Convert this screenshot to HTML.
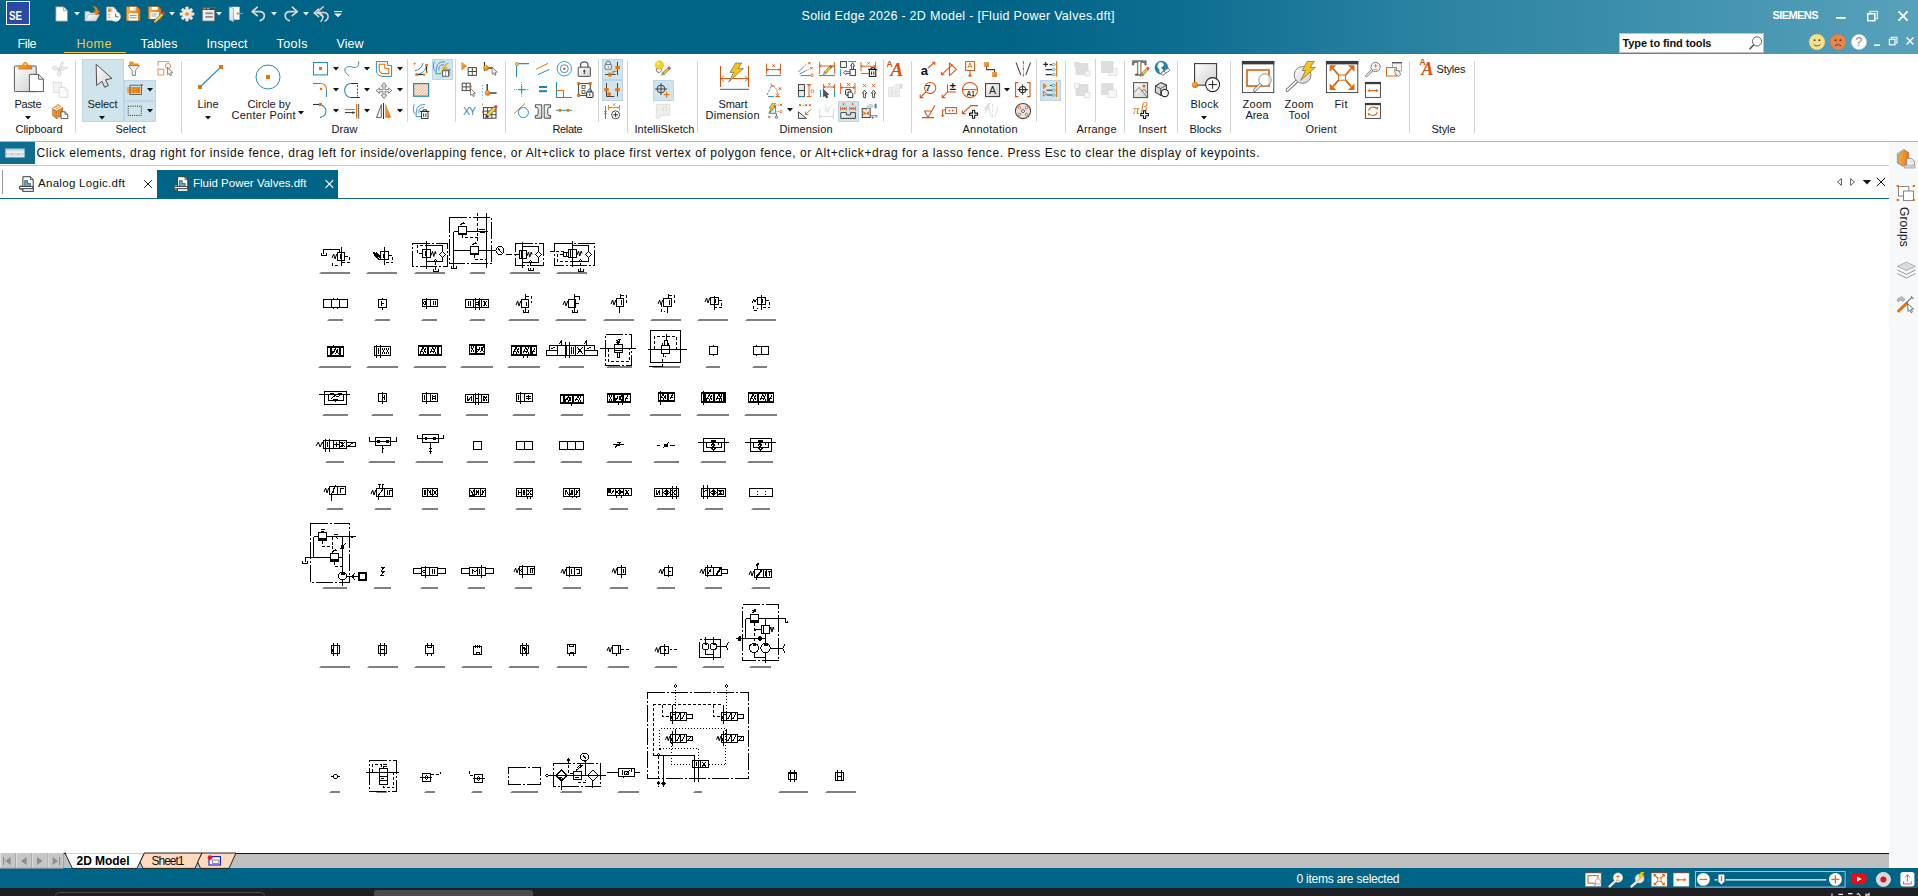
<!DOCTYPE html>
<html><head><meta charset="utf-8"><title>Solid Edge 2026 - 2D Model - [Fluid Power Valves.dft]</title>
<style>
html,body{margin:0;padding:0;background:#fff;}
body{width:1918px;height:896px;position:relative;overflow:hidden;font-family:"Liberation Sans",sans-serif;}
.b{position:absolute;display:block;}
.t{position:absolute;white-space:nowrap;display:block;}
svg{overflow:visible;}
</style></head><body>
<div class="b" style="left:0px;top:0px;width:1918px;height:54px;background:linear-gradient(90deg,#006487 0%,#006487 52%,#0e6e92 62%,#2a82a1 74%,#3e90ad 86%,#58a1ba 100%);"></div>
<div class="b" style="left:6px;top:1px;width:24px;height:24px;background:#2b49a8;border:1px solid #fff;box-sizing:border-box;"></div>
<span class="t" style="left:9.3px;top:7.5px;font-size:12.5px;line-height:16px;font-weight:700;color:#fff;transform:scaleX(0.78);transform-origin:0 50%">SE</span>
<span class="t" style="left:801.50px;top:7.75px;font-size:12.5px;line-height:16.5px;letter-spacing:0.292px;color:#fff;font-weight:400;">Solid Edge 2026 - 2D Model - [Fluid Power Valves.dft]</span>
<span class="t" style="left:1772.50px;top:7.50px;font-size:11px;line-height:15px;letter-spacing:-0.585px;color:#fff;font-weight:700;">SIEMENS</span>
<span class="t" style="left:17.50px;top:35.75px;font-size:12.5px;line-height:16.5px;letter-spacing:-0.381px;color:#fff;font-weight:400;">File</span>
<span class="t" style="left:76.50px;top:35.75px;font-size:12.5px;line-height:16.5px;letter-spacing:0.552px;color:#f3c93b;font-weight:400;">Home</span>
<span class="t" style="left:140.50px;top:35.75px;font-size:12.5px;line-height:16.5px;letter-spacing:0.173px;color:#fff;font-weight:400;">Tables</span>
<span class="t" style="left:206.50px;top:35.75px;font-size:12.5px;line-height:16.5px;letter-spacing:0.116px;color:#fff;font-weight:400;">Inspect</span>
<span class="t" style="left:276.50px;top:35.75px;font-size:12.5px;line-height:16.5px;letter-spacing:0.455px;color:#fff;font-weight:400;">Tools</span>
<span class="t" style="left:336.50px;top:35.75px;font-size:12.5px;line-height:16.5px;letter-spacing:0.044px;color:#fff;font-weight:400;">View</span>
<div class="b" style="left:64px;top:52px;width:62px;height:1.2px;background:#f3c93b;"></div>
<div class="b" style="left:1619px;top:32.5px;width:145px;height:20px;background:#fff;border:1px solid #c9bdbd;box-sizing:border-box;"></div>
<span class="t" style="left:1622.50px;top:35.50px;font-size:11px;line-height:15px;letter-spacing:-0.109px;color:#111;font-weight:700;">Type to find tools</span>
<div class="b" style="left:0px;top:54px;width:1918px;height:87px;background:#fff;"></div>
<div class="b" style="left:0px;top:140.6px;width:1918px;height:1.5px;background:#b4b4b4;"></div>
<div class="b" style="left:0px;top:142.1px;width:1889px;height:23px;background:#fff;"></div>
<div class="b" style="left:0px;top:142.1px;width:35px;height:21.8px;background:#0f6d91;"></div>
<div class="b" style="left:0px;top:164.8px;width:1889px;height:1.7px;background:#c6c6c6;"></div>
<span class="t" style="left:36.50px;top:145.00px;font-size:12px;line-height:16px;letter-spacing:0.557px;color:#111;font-weight:400;">Click elements, drag right for inside fence, drag left for inside/overlapping fence, or Alt+click to place first vertex of polygon fence, or Alt+click+drag for a lasso fence. Press Esc to clear the display of keypoints.</span>
<div class="b" style="left:0px;top:167px;width:1889px;height:31px;background:#fff;"></div>
<div class="b" style="left:2px;top:170px;width:1px;height:24px;background:#9a9a9a;"></div>
<div class="b" style="left:157px;top:170px;width:181px;height:28px;background:#006487;"></div>
<div class="b" style="left:0px;top:197.5px;width:1889px;height:1.2px;background:#0b6a8d;"></div>
<span class="t" style="left:38.00px;top:176.25px;font-size:11.5px;line-height:15.5px;letter-spacing:0.302px;color:#111;font-weight:400;">Analog Logic.dft</span>
<span class="t" style="left:193.00px;top:176.25px;font-size:11.5px;line-height:15.5px;letter-spacing:-0.003px;color:#fff;font-weight:400;">Fluid Power Valves.dft</span>
<div class="b" style="left:0px;top:199px;width:1889px;height:654px;background:#fff;"></div>
<div class="b" style="left:1889px;top:142px;width:29px;height:726px;background:#f7f8f9;"></div>
<div class="b" style="left:0px;top:853px;width:1889px;height:15px;background:#c0c0c0;"></div>
<div class="b" style="left:0px;top:852.5px;width:1889px;height:1.2px;background:#111;"></div>
<div class="b" style="left:0px;top:868px;width:1918px;height:20px;background:#006487;"></div>
<span class="t" style="left:1296.50px;top:871.00px;font-size:12px;line-height:16px;letter-spacing:-0.231px;color:#fff;font-weight:400;">0 items are selected</span>
<div class="b" style="left:0px;top:888px;width:1918px;height:8px;background:#1f1f23;"></div>
<div class="b" style="left:374px;top:890px;width:159px;height:6px;background:#4b4b50;border-radius:3px 3px 0 0;"></div>
<div class="b" style="left:55px;top:891.5px;width:210px;height:8px;background:transparent;border:1px solid #4a4a4e;border-radius:5px;box-sizing:border-box;"></div>
<div class="b" style="left:75px;top:61px;width:1px;height:72px;background:#d4d4d4;"></div>
<div class="b" style="left:181px;top:61px;width:1px;height:72px;background:#d4d4d4;"></div>
<div class="b" style="left:505px;top:61px;width:1px;height:72px;background:#d4d4d4;"></div>
<div class="b" style="left:627px;top:61px;width:1px;height:72px;background:#d4d4d4;"></div>
<div class="b" style="left:697px;top:61px;width:1px;height:72px;background:#d4d4d4;"></div>
<div class="b" style="left:911px;top:61px;width:1px;height:72px;background:#d4d4d4;"></div>
<div class="b" style="left:1065px;top:61px;width:1px;height:72px;background:#d4d4d4;"></div>
<div class="b" style="left:1124px;top:61px;width:1px;height:72px;background:#d4d4d4;"></div>
<div class="b" style="left:1177px;top:61px;width:1px;height:72px;background:#d4d4d4;"></div>
<div class="b" style="left:1230px;top:61px;width:1px;height:72px;background:#d4d4d4;"></div>
<div class="b" style="left:1408.5px;top:61px;width:1px;height:72px;background:#d4d4d4;"></div>
<div class="b" style="left:1473.5px;top:61px;width:1px;height:72px;background:#d4d4d4;"></div>
<div class="b" style="left:407px;top:59px;width:1px;height:63px;background:#d4d4d4;"></div>
<div class="b" style="left:455px;top:59px;width:1px;height:63px;background:#d4d4d4;"></div>
<div class="b" style="left:598px;top:59px;width:1px;height:63px;background:#d4d4d4;"></div>
<div class="b" style="left:882.5px;top:59px;width:1px;height:63px;background:#d4d4d4;"></div>
<div class="b" style="left:1036px;top:59px;width:1px;height:63px;background:#d4d4d4;"></div>
<div class="b" style="left:1095px;top:59px;width:1px;height:63px;background:#d4d4d4;"></div>
<div class="b" style="left:82px;top:59px;width:42px;height:63px;background:#cfe5eb;border:1px solid #bdd3ee;box-sizing:border-box;"></div>
<div class="b" style="left:124px;top:80px;width:32px;height:21px;background:#cfe5eb;border:1px solid #bdd3ee;box-sizing:border-box;"></div>
<div class="b" style="left:124px;top:101px;width:32px;height:21px;background:#cfe5eb;border:1px solid #bdd3ee;box-sizing:border-box;"></div>
<div class="b" style="left:432px;top:59px;width:21px;height:21px;background:#cfe5eb;border:1px solid #bdd3ee;box-sizing:border-box;"></div>
<div class="b" style="left:602px;top:59px;width:21px;height:21px;background:#cfe5eb;border:1px solid #bdd3ee;box-sizing:border-box;"></div>
<div class="b" style="left:602px;top:80px;width:21px;height:21px;background:#cfe5eb;border:1px solid #bdd3ee;box-sizing:border-box;"></div>
<div class="b" style="left:653px;top:80px;width:21px;height:21px;background:#cfe5eb;border:1px solid #bdd3ee;box-sizing:border-box;"></div>
<div class="b" style="left:838px;top:101px;width:21px;height:21px;background:#cfe5eb;border:1px solid #bdd3ee;box-sizing:border-box;"></div>
<div class="b" style="left:1040px;top:80px;width:21px;height:21px;background:#cfe5eb;border:1px solid #bdd3ee;box-sizing:border-box;"></div>
<span class="t" style="left:14.50px;top:96.50px;font-size:11px;line-height:15px;letter-spacing:-0.282px;color:#15151f;font-weight:400;">Paste</span>
<span class="t" style="left:15.50px;top:121.50px;font-size:11px;line-height:15px;letter-spacing:-0.011px;color:#15151f;font-weight:400;">Clipboard</span>
<span class="t" style="left:87.50px;top:96.50px;font-size:11px;line-height:15px;letter-spacing:-0.115px;color:#15151f;font-weight:400;">Select</span>
<span class="t" style="left:115.50px;top:121.50px;font-size:11px;line-height:15px;letter-spacing:-0.115px;color:#15151f;font-weight:400;">Select</span>
<span class="t" style="left:197.50px;top:96.50px;font-size:11px;line-height:15px;letter-spacing:0.067px;color:#15151f;font-weight:400;">Line</span>
<span class="t" style="left:247.50px;top:96.50px;font-size:11px;line-height:15px;letter-spacing:0.026px;color:#15151f;font-weight:400;">Circle by</span>
<span class="t" style="left:231.50px;top:107.50px;font-size:11px;line-height:15px;letter-spacing:0.259px;color:#15151f;font-weight:400;">Center Point</span>
<span class="t" style="left:331.50px;top:121.50px;font-size:11px;line-height:15px;letter-spacing:0.110px;color:#15151f;font-weight:400;">Draw</span>
<span class="t" style="left:552.50px;top:121.50px;font-size:11px;line-height:15px;letter-spacing:-0.360px;color:#15151f;font-weight:400;">Relate</span>
<span class="t" style="left:634.50px;top:121.50px;font-size:11px;line-height:15px;letter-spacing:0.057px;color:#15151f;font-weight:400;">IntelliSketch</span>
<span class="t" style="left:718.50px;top:96.50px;font-size:11px;line-height:15px;letter-spacing:-0.084px;color:#15151f;font-weight:400;">Smart</span>
<span class="t" style="left:705.50px;top:107.50px;font-size:11px;line-height:15px;letter-spacing:0.254px;color:#15151f;font-weight:400;">Dimension</span>
<span class="t" style="left:779.50px;top:121.50px;font-size:11px;line-height:15px;letter-spacing:0.129px;color:#15151f;font-weight:400;">Dimension</span>
<span class="t" style="left:962.50px;top:121.50px;font-size:11px;line-height:15px;letter-spacing:0.266px;color:#15151f;font-weight:400;">Annotation</span>
<span class="t" style="left:1076.50px;top:121.50px;font-size:11px;line-height:15px;letter-spacing:0.144px;color:#15151f;font-weight:400;">Arrange</span>
<span class="t" style="left:1138.50px;top:121.50px;font-size:11px;line-height:15px;letter-spacing:0.097px;color:#15151f;font-weight:400;">Insert</span>
<span class="t" style="left:1190.50px;top:96.50px;font-size:11px;line-height:15px;letter-spacing:0.275px;color:#15151f;font-weight:400;">Block</span>
<span class="t" style="left:1189.50px;top:121.50px;font-size:11px;line-height:15px;letter-spacing:-0.080px;color:#15151f;font-weight:400;">Blocks</span>
<span class="t" style="left:1242.50px;top:96.50px;font-size:11px;line-height:15px;letter-spacing:0.294px;color:#15151f;font-weight:400;">Zoom</span>
<span class="t" style="left:1245.50px;top:107.50px;font-size:11px;line-height:15px;letter-spacing:-0.079px;color:#15151f;font-weight:400;">Area</span>
<span class="t" style="left:1284.50px;top:96.50px;font-size:11px;line-height:15px;letter-spacing:0.294px;color:#15151f;font-weight:400;">Zoom</span>
<span class="t" style="left:1288.50px;top:107.50px;font-size:11px;line-height:15px;letter-spacing:0.273px;color:#15151f;font-weight:400;">Tool</span>
<span class="t" style="left:1334.50px;top:96.50px;font-size:11px;line-height:15px;letter-spacing:0.390px;color:#15151f;font-weight:400;">Fit</span>
<span class="t" style="left:1305.50px;top:121.50px;font-size:11px;line-height:15px;letter-spacing:0.209px;color:#15151f;font-weight:400;">Orient</span>
<span class="t" style="left:1431.50px;top:121.50px;font-size:11px;line-height:15px;letter-spacing:-0.114px;color:#15151f;font-weight:400;">Style</span>
<span class="t" style="left:1436.50px;top:61.50px;font-size:11px;line-height:15px;letter-spacing:-0.191px;color:#15151f;font-weight:400;">Styles</span>
<svg class="b" style="left:25px;top:116.25px;" width="6" height="3.5" viewBox="0 0 6 3.5"><path d="M0 0H6 L3 3.5Z" fill="#111"/></svg>
<svg class="b" style="left:99px;top:116.25px;" width="6" height="3.5" viewBox="0 0 6 3.5"><path d="M0 0H6 L3 3.5Z" fill="#111"/></svg>
<svg class="b" style="left:147px;top:88.25px;" width="6" height="3.5" viewBox="0 0 6 3.5"><path d="M0 0H6 L3 3.5Z" fill="#111"/></svg>
<svg class="b" style="left:147px;top:109.25px;" width="6" height="3.5" viewBox="0 0 6 3.5"><path d="M0 0H6 L3 3.5Z" fill="#111"/></svg>
<svg class="b" style="left:205px;top:116.25px;" width="6" height="3.5" viewBox="0 0 6 3.5"><path d="M0 0H6 L3 3.5Z" fill="#111"/></svg>
<svg class="b" style="left:298px;top:111.25px;" width="6" height="3.5" viewBox="0 0 6 3.5"><path d="M0 0H6 L3 3.5Z" fill="#111"/></svg>
<svg class="b" style="left:333px;top:67.25px;" width="6" height="3.5" viewBox="0 0 6 3.5"><path d="M0 0H6 L3 3.5Z" fill="#111"/></svg>
<svg class="b" style="left:364px;top:67.25px;" width="6" height="3.5" viewBox="0 0 6 3.5"><path d="M0 0H6 L3 3.5Z" fill="#111"/></svg>
<svg class="b" style="left:397px;top:67.25px;" width="6" height="3.5" viewBox="0 0 6 3.5"><path d="M0 0H6 L3 3.5Z" fill="#111"/></svg>
<svg class="b" style="left:333px;top:88.25px;" width="6" height="3.5" viewBox="0 0 6 3.5"><path d="M0 0H6 L3 3.5Z" fill="#111"/></svg>
<svg class="b" style="left:364px;top:88.25px;" width="6" height="3.5" viewBox="0 0 6 3.5"><path d="M0 0H6 L3 3.5Z" fill="#111"/></svg>
<svg class="b" style="left:397px;top:88.25px;" width="6" height="3.5" viewBox="0 0 6 3.5"><path d="M0 0H6 L3 3.5Z" fill="#111"/></svg>
<svg class="b" style="left:333px;top:109.25px;" width="6" height="3.5" viewBox="0 0 6 3.5"><path d="M0 0H6 L3 3.5Z" fill="#111"/></svg>
<svg class="b" style="left:364px;top:109.25px;" width="6" height="3.5" viewBox="0 0 6 3.5"><path d="M0 0H6 L3 3.5Z" fill="#111"/></svg>
<svg class="b" style="left:397px;top:109.25px;" width="6" height="3.5" viewBox="0 0 6 3.5"><path d="M0 0H6 L3 3.5Z" fill="#111"/></svg>
<svg class="b" style="left:787px;top:108.25px;" width="6" height="3.5" viewBox="0 0 6 3.5"><path d="M0 0H6 L3 3.5Z" fill="#111"/></svg>
<svg class="b" style="left:1004px;top:88.25px;" width="6" height="3.5" viewBox="0 0 6 3.5"><path d="M0 0H6 L3 3.5Z" fill="#111"/></svg>
<svg class="b" style="left:1201px;top:116.25px;" width="6" height="3.5" viewBox="0 0 6 3.5"><path d="M0 0H6 L3 3.5Z" fill="#111"/></svg>
<svg class="b" width="0" height="0" style="left:0;top:0"><defs>
<linearGradient id="gGray" x1="0" y1="0" x2="1" y2="1"><stop offset="0" stop-color="#ffffff"/><stop offset="1" stop-color="#cfcfcf"/></linearGradient>
<linearGradient id="gOr" x1="0" y1="0" x2="1" y2="1"><stop offset="0" stop-color="#fbb040"/><stop offset="1" stop-color="#e8700a"/></linearGradient>
<linearGradient id="gOrH" x1="0" y1="0" x2="1" y2="0"><stop offset="0" stop-color="#fbb040"/><stop offset="1" stop-color="#ea7410"/></linearGradient>
<radialGradient id="gBall" cx="0.4" cy="0.35" r="0.7"><stop offset="0" stop-color="#ffb347"/><stop offset="1" stop-color="#e56a00"/></radialGradient>
</defs></svg><svg class="b" style="left:55px;top:6px;" width="14" height="16" viewBox="0 0 14 16"><path d="M0.8 0.8H8.5L12.6 4.8V15.2H0.8Z" fill="#fff" stroke="#8a7d7a" stroke-width="0.8"/><path d="M8.5 0.8V4.8H12.6" fill="#e9e9e9" stroke="#9a8d8a" stroke-width="0.7"/></svg>
<svg class="b" style="left:74px;top:11.95px;" width="6" height="3.5" viewBox="0 0 6 3.5"><path d="M0 0H6 L3 3.5Z" fill="#e4eef2"/></svg>
<svg class="b" style="left:84px;top:5px;" width="17" height="17" viewBox="0 0 17 17"><path d="M1 16V6.5H5L6.5 8H12V10" fill="#e2e2e2" stroke="#bdbdbd" stroke-width="0.6"/><path d="M1 16L4.5 9.5H15.5L12 16Z" fill="url(#gGray)" stroke="#a9a9a9" stroke-width="0.6"/><path d="M8.5 1.2C12 1 14 3 14 6.2H16L12.7 10L9.4 6.2H11.4C11.4 4 10.5 2.5 8.5 1.2Z" fill="#f27c0e" stroke="#e06000" stroke-width="0.4"/></svg>
<svg class="b" style="left:106px;top:6px;" width="15" height="16" viewBox="0 0 15 16"><path d="M0.6 1H7.5L10.5 4V14.5H0.6Z" fill="#f1f1f1" stroke="#b9b3b0" stroke-width="0.6"/><rect x="2" y="2.5" width="3.4" height="3.4" fill="#f08a2a"/><rect x="2.2" y="7.8" width="1.4" height="1.2" fill="#f08a2a"/><rect x="2.2" y="10.8" width="1.4" height="1.2" fill="#f08a2a"/><circle cx="9.6" cy="10.6" r="4.9" fill="#fff" stroke="#e9e9e9" stroke-width="0.5"/><path d="M9.6 7.6V10.9H12.6" fill="none" stroke="#555" stroke-width="0.9"/></svg>
<svg class="b" style="left:126px;top:6.4px;" width="15" height="16" viewBox="0 0 15 16"><path d="M0.5 0.7H11L14 3.6V14.6H0.5Z" fill="url(#gOrH)" stroke="#d9690a" stroke-width="0.5"/><rect x="4" y="0.9" width="6.2" height="3.6" fill="#fff"/><rect x="8.4" y="1.4" width="1.2" height="2.6" fill="#b9b9b9"/><rect x="2.6" y="7" width="9.4" height="7.6" fill="#f7f7f7"/><rect x="4" y="9" width="6.6" height="0.9" fill="#8e8e8e"/><rect x="4" y="11.3" width="6.6" height="0.9" fill="#8e8e8e"/></svg>
<svg class="b" style="left:148px;top:6px;" width="17" height="17" viewBox="0 0 17 17"><path d="M0.5 0.7H10.5L13 3.2V13H0.5Z" fill="url(#gOrH)" stroke="#d9690a" stroke-width="0.5"/><rect x="3.6" y="0.9" width="6" height="3" fill="#fff"/><rect x="2.4" y="6" width="8.6" height="7" fill="#f7f7f7"/><rect x="3.6" y="7.6" width="6" height="0.8" fill="#999"/><rect x="3.6" y="9.6" width="4.4" height="0.8" fill="#999"/><path d="M6.3 14.4L13.6 7.1L15.6 9.1L8.3 16.2L5.9 16.7Z" fill="#f3d23a" stroke="#4a4a3a" stroke-width="0.6"/><path d="M13.6 7.1L14.5 6.2A1.2 1.2 0 0 1 16.4 8.2L15.6 9.1Z" fill="#e23a44"/><path d="M6.3 14.4L8.3 16.2L5.9 16.7Z" fill="#fff" stroke="#333" stroke-width="0.4"/></svg>
<svg class="b" style="left:169px;top:11.95px;" width="6" height="3.5" viewBox="0 0 6 3.5"><path d="M0 0H6 L3 3.5Z" fill="#e4eef2"/></svg>
<svg class="b" style="left:180px;top:7px;" width="14" height="14" viewBox="0 0 14 14"><g transform="translate(7,7)"><rect x="-1.5" y="-7.2" width="3" height="3.4" rx="0.6" transform="rotate(0)" fill="#ededed" stroke="#b5aaa6" stroke-width="0.4"/><rect x="-1.5" y="-7.2" width="3" height="3.4" rx="0.6" transform="rotate(45)" fill="#ededed" stroke="#b5aaa6" stroke-width="0.4"/><rect x="-1.5" y="-7.2" width="3" height="3.4" rx="0.6" transform="rotate(90)" fill="#ededed" stroke="#b5aaa6" stroke-width="0.4"/><rect x="-1.5" y="-7.2" width="3" height="3.4" rx="0.6" transform="rotate(135)" fill="#ededed" stroke="#b5aaa6" stroke-width="0.4"/><rect x="-1.5" y="-7.2" width="3" height="3.4" rx="0.6" transform="rotate(180)" fill="#ededed" stroke="#b5aaa6" stroke-width="0.4"/><rect x="-1.5" y="-7.2" width="3" height="3.4" rx="0.6" transform="rotate(225)" fill="#ededed" stroke="#b5aaa6" stroke-width="0.4"/><rect x="-1.5" y="-7.2" width="3" height="3.4" rx="0.6" transform="rotate(270)" fill="#ededed" stroke="#b5aaa6" stroke-width="0.4"/><rect x="-1.5" y="-7.2" width="3" height="3.4" rx="0.6" transform="rotate(315)" fill="#ededed" stroke="#b5aaa6" stroke-width="0.4"/><circle r="4.9" fill="#ededed" stroke="#c4bbb7" stroke-width="0.4"/><circle r="2.1" fill="#f28a1e" stroke="#fbd6a8" stroke-width="0.6"/></g></svg>
<svg class="b" style="left:202px;top:7px;" width="13" height="14.5" viewBox="0 0 13 14.5"><rect x="0.4" y="0.4" width="12.2" height="13.6" fill="#ececec" stroke="#7d7572" stroke-width="0.7"/><rect x="0.4" y="0.4" width="12.2" height="2.6" fill="#464646"/><rect x="1.6" y="1" width="2.2" height="1.3" fill="#f08a2a"/><rect x="5" y="1" width="2.6" height="1.3" fill="#52b7e0"/><rect x="3.4" y="5.4" width="7.4" height="1.8" fill="#8d8d8d"/><rect x="3.4" y="9" width="7.4" height="1.8" fill="#8d8d8d"/></svg>
<svg class="b" style="left:216.3px;top:11.95px;" width="6" height="3.5" viewBox="0 0 6 3.5"><path d="M0 0H6 L3 3.5Z" fill="#e4eef2"/></svg>
<svg class="b" style="left:228px;top:6px;" width="16" height="17" viewBox="0 0 16 17"><rect x="3.4" y="1" width="8" height="12.6" fill="#fbfbfb" stroke="#cfcfcf" stroke-width="0.5"/><path d="M1.2 0.8L5.6 2.6V16L1.2 13.8Z" fill="url(#gGray)" stroke="#9b9490" stroke-width="0.6"/><path d="M15 7.5H9" stroke="#f08419" stroke-width="1.1"/><path d="M10.4 5.9L8 7.5L10.4 9.1Z" fill="#f08419"/></svg>
<svg class="b" style="left:250.5px;top:6.4px;" width="16" height="16" viewBox="0 0 16 16"><path d="M6.2 1.2L1.2 5.6L6.2 9.6" fill="none" stroke="#ddd6d1" stroke-width="1.7" stroke-linecap="round" stroke-linejoin="round"/><path d="M1.8 5.6H8.6C14.5 5.6 15 12.6 9.2 14.6" fill="none" stroke="#ddd6d1" stroke-width="1.7" stroke-linecap="round"/></svg>
<svg class="b" style="left:271.2px;top:11.95px;" width="6" height="3.5" viewBox="0 0 6 3.5"><path d="M0 0H6 L3 3.5Z" fill="#e4eef2"/></svg>
<svg class="b" style="left:282.5px;top:6.4px;" width="16" height="16" viewBox="0 0 16 16"><g transform="translate(15.5,0) scale(-1,1)"><path d="M6.2 1.2L1.2 5.6L6.2 9.6" fill="none" stroke="#ddd6d1" stroke-width="1.7" stroke-linecap="round" stroke-linejoin="round"/><path d="M1.8 5.6H8.6C14.5 5.6 15 12.6 9.2 14.6" fill="none" stroke="#ddd6d1" stroke-width="1.7" stroke-linecap="round"/></g></svg>
<svg class="b" style="left:303.2px;top:11.95px;" width="6" height="3.5" viewBox="0 0 6 3.5"><path d="M0 0H6 L3 3.5Z" fill="#e4eef2"/></svg>
<svg class="b" style="left:312.5px;top:6px;" width="18" height="17" viewBox="0 0 18 17"><path d="M5.6 3L1 7L5.6 10.6" fill="none" stroke="#ddd6d1" stroke-width="1.5" stroke-linecap="round" stroke-linejoin="round"/><path d="M10.2 0.8L4.4 6.2L10.2 10.8" fill="none" stroke="#ddd6d1" stroke-width="1.5" stroke-linecap="round" stroke-linejoin="round"/><path d="M5 6.4H10.5C16 6.4 16.6 12.6 12 15" fill="none" stroke="#ddd6d1" stroke-width="1.5" stroke-linecap="round"/><path d="M2 7C9 6.4 12 10 8 15.4" fill="none" stroke="#ddd6d1" stroke-width="1.4" stroke-linecap="round"/></svg>
<svg class="b" style="left:334px;top:11px;" width="8" height="6.5" viewBox="0 0 8 6.5"><rect x="0" y="0" width="8" height="1.1" fill="#f2f6f8"/><path d="M0 2.4H8L4 6.2Z" fill="#f2f6f8"/></svg>
<svg class="b" style="left:10px;top:58px" width="40" height="40" viewBox="10 58 40 40"><rect x="14.4" y="66" width="21.8" height="25.6" rx="0.8" fill="url(#gGray)" stroke="#4a4a4a" stroke-width="0.9"/><path d="M18.6 69.2V66.6Q18.6 65.4 20 65.4H22.4Q23.2 62 25.3 62Q27.4 62 28.2 65.4H30.6Q32 65.4 32 66.6V69.2Z" fill="url(#gOr)" stroke="#d87a10" stroke-width="0.4"/><circle cx="25.3" cy="64.4" r="0.8" fill="#fff3dd"/><path d="M29.4 74.4H38.6L43.4 79.2V91.6H29.4Z" fill="#fff" stroke="#4a4a4a" stroke-width="0.9"/><path d="M38.6 74.4V79.2H43.4" fill="none" stroke="#4a4a4a" stroke-width="0.9"/></svg>
<svg class="b" style="left:50px;top:58px" width="20" height="20" viewBox="50 58 20 20"><g fill="#ececec" stroke="#d2d2d2" stroke-width="0.6" stroke-linejoin="round"><path d="M58.2 70.4C59.4 66.4 60.8 63.4 63 61.2C63.4 64.6 62.2 67.6 60.4 70.8Z"/><path d="M58.6 68.2C61.6 67 64.6 66.6 68 67.4C65.6 69.8 62.4 70.8 59.2 70.6Z"/><ellipse cx="55" cy="68.2" rx="2.8" ry="1.9" transform="rotate(18 55 68.2)"/><ellipse cx="59.2" cy="73.6" rx="1.9" ry="2.7" transform="rotate(8 59.2 73.6)"/><circle cx="59.4" cy="69.6" r="0.9" fill="#d8d8d8"/></g></svg>
<svg class="b" style="left:50px;top:80px" width="20" height="20" viewBox="50 80 20 20"><rect x="53.2" y="82.4" width="8.2" height="10" fill="#f4f4f4" stroke="#d4d4d4" stroke-width="0.7"/><path d="M59.2 87.4H65L67.8 90.2V97.4H59.2Z" fill="#fbfbfb" stroke="#d0d0d0" stroke-width="0.7"/><path d="M65 87.4V90.2H67.8" fill="none" stroke="#d4d4d4" stroke-width="0.6"/></svg>
<svg class="b" style="left:50px;top:102px" width="20" height="20" viewBox="50 102 20 20"><path d="M52.4 108.4L56.6 110.8V118.8L52.4 115.6Z" fill="#f9a838" stroke="#7a4a14" stroke-width="0.4"/><path d="M56.6 110.8L62.8 107.8V115.4L56.6 118.8Z" fill="url(#gOrH)" stroke="#7a4a14" stroke-width="0.4"/><path d="M52.4 108.4L58 104.2L62.8 107.8L56.6 110.8Z" fill="#fff" stroke="#7a4a14" stroke-width="0.4"/><path d="M54 107.6L59.4 105.4M55.6 109L61 106.6" stroke="#f08a1e" stroke-width="1"/><path d="M54 109.6V116.6M55.4 110.4V117.6M58.6 110V117.4" stroke="#c2600e" stroke-width="0.5"/><path d="M61 111.8H65L67.8 114.4V118.6H61Z" fill="#fff" stroke="#4a4a4a" stroke-width="0.9" stroke-linejoin="round"/><path d="M65 111.8V114.4H67.8" fill="none" stroke="#4a4a4a" stroke-width="0.7"/></svg>
<svg class="b" style="left:92px;top:60px" width="26" height="32" viewBox="92 60 26 32"><path d="M96.2 64.4L112 78.4L105.6 79.8L108.4 85.6L104.6 87.2L102 81.4L96.6 85.4Z" fill="url(#gGray)" stroke="#3c3c3c" stroke-width="0.9" stroke-linejoin="round"/></svg>
<svg class="b" style="left:124px;top:59px" width="20" height="20" viewBox="-10 -10 20 20"><rect x="-4.8" y="-7.4" width="4.6" height="4" fill="#f4941f"/><rect x="-0.4" y="-5.6" width="4.8" height="2.6" fill="#f4941f"/><path d="M-5.8 -3.4H5.4L1.4 1.6V6.4H-1.8V1.6Z" fill="#f2f2f2" stroke="#6c6c6c" stroke-width="0.8" stroke-linejoin="round"/></svg>
<svg class="b" style="left:155px;top:59px" width="20" height="20" viewBox="-10 -10 20 20"><path d="M4.6 -7.4H-7V-3M-7 -0.6V6H-1.2V0.2H-7" fill="none" stroke="#e8833a" stroke-width="0.9"/><circle cx="3" cy="-3" r="2.6" fill="none" stroke="#e8833a" stroke-width="0.9"/><path d="M2.4 -1.6L7.8 3.4L5.6 3.8L6.6 6.2L5.2 6.8L4.2 4.4L2.6 5.8Z" fill="#f4f4f4" stroke="#444" stroke-width="0.6"/></svg>
<svg class="b" style="left:124px;top:82px" width="20" height="16" viewBox="124 82 20 16"><rect x="126.8" y="87" width="13.4" height="6.2" fill="url(#gOrH)"/><rect x="133.2" y="87" width="0.7" height="6.2" fill="#d96c10"/><rect x="130" y="85.2" width="11.4" height="9.4" fill="none" stroke="#4a4a4a" stroke-width="0.8"/><circle cx="141.8" cy="85" r="1" fill="#f0232d"/></svg>
<svg class="b" style="left:124px;top:103px" width="20" height="16" viewBox="124 103 20 16"><rect x="128.2" y="106.2" width="13.2" height="9.2" fill="none" stroke="#222" stroke-width="0.9" stroke-dasharray="1.1 1.1"/></svg>
<svg class="b" style="left:195px;top:60px" width="32" height="32" viewBox="195 60 32 32"><path d="M200 87L221 67" stroke="#2e8db3" stroke-width="1.1"/><rect x="198" y="85" width="4" height="4" fill="#e8730c"/><rect x="219" y="65" width="4" height="4" fill="#e8730c"/></svg>
<svg class="b" style="left:254px;top:62px" width="30" height="30" viewBox="254 62 30 30"><circle cx="268" cy="77" r="12" fill="none" stroke="#2e8db3" stroke-width="1"/><rect x="266" y="75" width="4" height="4" fill="#e8730c"/></svg>
<svg class="b" style="left:310px;top:58px" width="100" height="68" viewBox="310 58 100 68"><rect x="313.5" y="62.5" width="14" height="12.4" fill="none" stroke="#2e8db3" stroke-width="1.1"/><rect x="319" y="67" width="3" height="3" fill="#e8730c"/><path d="M358.6 61.4C359.4 66 356.6 68.6 352.6 67.2C349 65.8 344.6 67 344.8 70C345 72.6 347 74.4 349.2 75.8" fill="none" stroke="#2e8db3" stroke-width="1"/><path d="M376.4 61.6H387.6V65.4H391.6V76.4H383C378.8 76.4 376.4 73.6 376.4 69.6Z" fill="none" stroke="#2e8db3" stroke-width="1"/><path d="M379.2 64.2H384.8V68.2H388.8V73.6H383.6C380.8 73.6 379.2 71.6 379.2 69Z" fill="none" stroke="#e8730c" stroke-width="1.1"/><path d="M313 83.5H320" stroke="#2e8db3" stroke-width="1.1" fill="none"/><path d="M320 83.5C324 83.5 326.5 86 326.5 90" stroke="#e8730c" stroke-width="1.1" fill="none"/><path d="M326.5 90V97" stroke="#2e8db3" stroke-width="1.1"/><rect x="319.9" y="87.9" width="2.2" height="2.2" fill="#e8730c"/><path d="M351 83.5C342.6 83.5 342.6 97.5 351 97.5" fill="none" stroke="#2e8db3" stroke-width="1.1"/><path d="M351 83.5H358M351 97.5H360" stroke="#333" stroke-width="1.1"/><path d="M357.5 85V96.5" stroke="#333" stroke-width="0.9" stroke-dasharray="2 1.4"/><path d="M384 82.6L386.8 86.2H385.1V89.5H388.4V87.8L391.9 90.6L388.4 93.4V91.7H385.1V95H386.8L384 98.6L381.2 95H382.9V91.7H379.6V93.4L376.1 90.6L379.6 87.8V89.5H382.9V86.2H381.2Z" fill="#e4e4e4" stroke="#6e6e6e" stroke-width="0.8" stroke-linejoin="round"/><path d="M313 104.5H320" stroke="#333" stroke-width="1.1"/><path d="M320.6 104.8C327.6 107 328 115.4 320 117.6" fill="none" stroke="#2e8db3" stroke-width="1.1"/><rect x="319" y="103" width="3" height="3" fill="#e8730c"/><path d="M345 109.5H355" stroke="#e8730c" stroke-width="1.1"/><path d="M345 112.6H353" stroke="#333" stroke-width="1"/><path d="M352.4 111.2L355.4 112.6L352.4 114Z" fill="#333"/><path d="M356.6 104V118.6" stroke="#e8730c" stroke-width="1.2"/><path d="M358.7 104V118.6" stroke="#555" stroke-width="1"/><path d="M381.4 104.6V117.6H376.4Z" fill="#ececec" stroke="#4a4a4a" stroke-width="0.8"/><path d="M383.5 103V119" stroke="#333" stroke-width="1"/><path d="M385.6 104.6V117.6H390.8Z" fill="url(#gOr)" stroke="#e07010" stroke-width="0.5"/></svg>
<svg class="b" style="left:410px;top:58px" width="50" height="66" viewBox="410 58 50 66"><path d="M414.6 62.4V64.8M413.4 63.6H415.8" stroke="#e8730c" stroke-width="0.8"/><path d="M423 63C422 67.6 419 70 414.8 70.8" fill="none" stroke="#2e8db3" stroke-width="1"/><path d="M416.6 74.6C422.6 73.6 425.4 70.6 426.6 65.4" fill="none" stroke="#2e8db3" stroke-width="1"/><path d="M416.6 74.6H424M426.6 65.4V72" stroke="#222" stroke-width="1"/><rect x="415.3" y="73.3" width="2.6" height="2.6" fill="#e8730c"/><rect x="425.3" y="63.9" width="2.6" height="2.6" fill="#e8730c"/><rect x="423.3" y="73.7" width="1.8" height="1.8" fill="#e8730c"/><rect x="425.7" y="71.3" width="1.8" height="1.8" fill="#e8730c"/><clipPath id="hc"><rect x="413.6" y="83.6" width="15" height="12.6"/></clipPath><rect x="413.6" y="83.6" width="15" height="12.6" fill="#fdeee2"/><g clip-path="url(#hc)" stroke="#ee8a4a" stroke-width="0.7"><path d="M398 97L412 83"/><path d="M400.9 97L414.9 83"/><path d="M403.8 97L417.8 83"/><path d="M406.7 97L420.7 83"/><path d="M409.6 97L423.6 83"/><path d="M412.5 97L426.5 83"/><path d="M415.4 97L429.4 83"/><path d="M418.3 97L432.3 83"/><path d="M421.2 97L435.2 83"/><path d="M424.1 97L438.1 83"/><path d="M427 97L441 83"/><path d="M429.9 97L443.9 83"/><path d="M432.8 97L446.8 83"/><path d="M435.7 97L449.7 83"/></g><rect x="413.6" y="83.6" width="15" height="12.6" fill="none" stroke="#2e8db3" stroke-width="1.3"/><path d="M425 104.6C418 104.2 416 108 416 116.6H421" fill="none" stroke="#2e8db3" stroke-width="0.9"/><path d="M414.4 104.4C412.6 108 413.4 112 415 114" fill="none" stroke="#2e8db3" stroke-width="0.9"/><path d="M424 107.4C419.6 107.4 418.4 110 419 113.4" fill="none" stroke="#2e8db3" stroke-width="0.9"/><rect x="421.4" y="111.6" width="6.6" height="6.8" fill="#fff" stroke="#222" stroke-width="0.9"/><path d="M420 111.4H429.4M423 111.2V109.8H426.4V111.2" fill="none" stroke="#222" stroke-width="0.9"/><path d="M423.6 113.4V116.8M425.8 113.4V116.8" stroke="#222" stroke-width="0.9"/><path d="M445 61.8C438 61.4 436 65.2 436 73.8H441" fill="none" stroke="#2e8db3" stroke-width="0.9"/><path d="M434.4 61.6C432.6 65.2 433.4 69.2 435 71.2" fill="none" stroke="#2e8db3" stroke-width="0.9"/><path d="M444 64.6C439.6 64.6 438.4 67.2 439 70.6" fill="none" stroke="#2e8db3" stroke-width="0.9"/><path d="M446.4 63.2L441.6 68.6H444.2L440.2 73.6L447.4 67.4H444.6L448.4 63.2Z" fill="#f6c21c" stroke="#e48a10" stroke-width="0.4"/><path d="M442.4 70.8L444 69.4H449.8L448.6 70.8Z M448.6 70.8L449.8 69.4V74.6L448.6 76.2Z" fill="#ddd" stroke="#555" stroke-width="0.5"/><rect x="442.4" y="70.8" width="6.2" height="5.4" fill="#fff" stroke="#444" stroke-width="0.8"/><path d="M445.5 70.8V76.2" stroke="#777" stroke-width="0.6"/></svg>
<svg class="b" style="left:458px;top:58px" width="44" height="66" viewBox="458 58 44 66"><path d="M461.6 62V70.2L466.8 66Z" fill="url(#gOr)" stroke="#e06a00" stroke-width="0.3"/><rect x="468.2" y="67.6" width="8.2" height="7.8" fill="#fff" stroke="#4a4a4a" stroke-width="1"/><path d="M472.3 67.6V75.4M468.2 71.5H476.4" stroke="#4a4a4a" stroke-width="1"/><path d="M484.5 62V71" stroke="#333" stroke-width="1.2"/><path d="M486 68H492.4" stroke="#333" stroke-width="1.4"/><circle cx="486" cy="68" r="2.6" fill="url(#gBall)" stroke="#e06a00" stroke-width="0.3"/><path d="M492 67.2L497.13 72.14L495.04 72.425L496.085 74.8L494.85 75.37L493.805 72.995L492.19 74.23Z" fill="#f6f6f6" stroke="#555" stroke-width="0.7" stroke-linejoin="round"/><rect x="462.2" y="83.2" width="8" height="7.4" fill="#fff" stroke="#4a4a4a" stroke-width="1"/><path d="M466.2 83.2V90.6M462.2 86.9H470.2" stroke="#4a4a4a" stroke-width="1"/><rect x="469.2" y="85.2" width="2.4" height="2.4" fill="#e8730c"/><path d="M470.4 88.4L475.53 93.34L473.44 93.625L474.485 96L473.25 96.57L472.205 94.195L470.59 95.43Z" fill="#f6f6f6" stroke="#555" stroke-width="0.7" stroke-linejoin="round"/><path d="M482.5 85V98.5" stroke="#1aa0d2" stroke-width="0.9" stroke-dasharray="1 2.2"/><path d="M487.2 84V93" stroke="#333" stroke-width="1.4"/><path d="M488 93H496.6" stroke="#333" stroke-width="1.4"/><circle cx="487.6" cy="93" r="2.6" fill="url(#gBall)" stroke="#e06a00" stroke-width="0.3"/><path d="M482.5 103.5V105.4M482.5 111V113" stroke="#e8730c" stroke-width="0.8"/><rect x="483.4" y="107.6" width="12.6" height="10.6" fill="#fff" stroke="#3c3c3c" stroke-width="1"/><path d="M487.6 107.6V118.2M491.8 107.6V118.2M483.4 111.1H496M483.4 114.7H496" stroke="#3c3c3c" stroke-width="0.9"/><path d="M486.4 114.4L493.8 106.6L496.2 108.8L488.8 116.6L485.6 117.4Z" fill="#efcf3a" stroke="#5a4a1a" stroke-width="0.6"/><path d="M493.8 106.6L494.8 105.6A1.4 1.4 0 0 1 497 107.8L496.2 108.8Z" fill="#e5444c"/><path d="M486.4 114.4L488.8 116.6L485.6 117.4Z" fill="#333"/></svg>
<span class="t" style="left:463.10px;top:103.75px;font-size:10.5px;line-height:14.5px;letter-spacing:-1.008px;color:#2e8db3;font-weight:400;">XY</span>
<svg class="b" style="left:510px;top:58px" width="120" height="66" viewBox="510 58 120 66"><path d="M518.4 63.6H529M516.6 65.6V77" stroke="#2e8db3" stroke-width="1.1"/><circle cx="517" cy="64" r="1.6" fill="#f7c9a0" stroke="#e8730c" stroke-width="0.8"/><path d="M536.2 69.2L548 63.4" stroke="#e8730c" stroke-width="1"/><path d="M538 74.6L549.4 69.4" stroke="#2e8db3" stroke-width="1"/><circle cx="564.3" cy="68.7" r="7.2" fill="none" stroke="#2e8db3" stroke-width="0.9"/><circle cx="564.3" cy="68.7" r="4" fill="none" stroke="#2e8db3" stroke-width="0.9"/><circle cx="564.3" cy="68.7" r="1.3" fill="#e8730c"/><path d="M580.64 67.2V64.86C580.64 60.96 587.96 60.96 587.96 64.86V67.2" fill="none" stroke="#555" stroke-width="1.3"/><rect x="578.2" y="67.2" width="12.2" height="9.2" rx="0.6" fill="url(#gGray)" stroke="#3c3c3c" stroke-width="0.9"/><path d="M584.3 69.6L582.8 71.6H583.8V74H584.8V71.6H585.8Z" fill="#333"/><path d="M518 89.6H525.2M521.6 85.4V93.4" stroke="#1aa0d2" stroke-width="1.1"/><path d="M514 89.6H518M525.2 89.6H529.4M521.6 82V85.4M521.6 93.4V97.4" stroke="#1aa0d2" stroke-width="1" stroke-dasharray="1 1.2"/><rect x="539" y="86" width="8" height="2" fill="#2286ac"/><rect x="539" y="90.2" width="8" height="2" fill="#2286ac"/><path d="M556.5 82V97.5H572" fill="none" stroke="#2e8db3" stroke-width="1.1"/><path d="M556.5 90.5H563.5V97.5" fill="none" stroke="#e8730c" stroke-width="1.1"/><rect x="578.6" y="83.6" width="11.6" height="11.8" fill="none" stroke="#333" stroke-width="0.9"/><rect x="577.1" y="82.1" width="3" height="3" fill="#e8730c"/><rect x="588.7" y="82.1" width="3" height="3" fill="#e8730c"/><rect x="577.1" y="93.9" width="3" height="3" fill="#e8730c"/><rect x="582" y="85.4" width="3" height="3" fill="#fff" stroke="#444" stroke-width="0.8"/><rect x="582" y="90.6" width="3" height="3" fill="#fff" stroke="#444" stroke-width="0.8"/><path d="M588 92V90.6C588 88.4 591.6 88.4 591.6 90.6V92" fill="none" stroke="#555" stroke-width="1"/><rect x="586.6" y="92" width="6.4" height="5.4" rx="0.5" fill="#fff" stroke="#222" stroke-width="1"/><rect x="589.3" y="93.6" width="1" height="2.2" fill="#222"/><path d="M514 113.6L525 103.4" stroke="#e8730c" stroke-width="1"/><circle cx="523.4" cy="112.6" r="5" fill="none" stroke="#2e8db3" stroke-width="1"/><path d="M535.4 104.8H541.8V118.2H535.4V115.6H537.4L538.2 113.6V109.4L537.4 107.4H535.4Z" fill="url(#gGray)" stroke="#3c3c3c" stroke-width="0.9"/><path d="M550.6 104.8H544.2V118.2H550.6V115.6H548.6L547.8 113.6V109.4L548.6 107.4H550.6Z" fill="url(#gGray)" stroke="#3c3c3c" stroke-width="0.9"/><path d="M556 110.3H572" stroke="#1aa0d2" stroke-width="1"/><circle cx="560" cy="110.3" r="1.6" fill="#e8730c"/><circle cx="568" cy="110.3" r="1.6" fill="#e8730c"/><path d="M606 64.6V63.2C606 60.6 610.4 60.6 610.4 63.2V64.6" fill="none" stroke="#666" stroke-width="1"/><rect x="605" y="64.6" width="6.4" height="4.6" rx="0.5" fill="#f4f4f4" stroke="#555" stroke-width="0.8"/><rect x="607.8" y="66.2" width="0.9" height="1.4" fill="#555"/><path d="M617.5 62V75" stroke="#444" stroke-width="1"/><path d="M605 74.5H615.6" stroke="#444" stroke-width="1"/><rect x="615.4" y="66" width="4.4" height="3" fill="#e8730c"/><rect x="608.4" y="72.6" width="3" height="4" fill="#e8730c"/><path d="M613 74.5V71.4H616.6" fill="none" stroke="#e8730c" stroke-width="1.2"/><path d="M606.5 83V96.5H614.4M617.5 83V96.5" fill="none" stroke="#444" stroke-width="1"/><rect x="604.2" y="88.2" width="4.6" height="3" fill="#e8730c"/><rect x="615.2" y="88.2" width="4.6" height="3" fill="#e8730c"/><rect x="607.4" y="92.4" width="3.4" height="3.4" fill="#e8730c"/><path d="M605.5 106V119" stroke="#2e8db3" stroke-width="1"/><path d="M604 111.6H607M604 113.4H607" stroke="#e8730c" stroke-width="0.9"/><path d="M608.4 107.6H619.6M608.4 105V110.4M619.6 105V110.4" stroke="#e8730c" stroke-width="0.9"/><path d="M613 103.4L615.4 105.8M615.4 103.4L613 105.8" stroke="#e8730c" stroke-width="0.8"/><path d="M608.6 107.6L610.6 106.6V108.6ZM619.4 107.6L617.4 106.6V108.6Z" fill="#e8730c"/><circle cx="615.6" cy="114.8" r="4" fill="#fff" stroke="#222" stroke-width="0.8"/><path d="M613.2 114.8H618M615.6 112.4V117.2" stroke="#222" stroke-width="0.9"/></svg>
<svg class="b" style="left:650px;top:58px" width="30" height="66" viewBox="650 58 30 66"><path d="M656.4 68.6C656 71.4 657 72.6 659.8 72.4L661.6 70.4V68Z" fill="#f8f8f8" stroke="#444" stroke-width="0.7"/><circle cx="659.4" cy="65" r="4.3" fill="#f7d21a" stroke="#e0b010" stroke-width="0.4"/><circle cx="658.2" cy="63.6" r="1.6" fill="#fff3a0" opacity="0.8"/><path d="M664.265 74.3634L669.473 69.5274L667.839 67.7686L662.631 72.6046Z" fill="#e8c43a" stroke="#5a4a1a" stroke-width="0.5"/><path d="M661.6 75.2L664.265 74.3634L662.631 72.6046Z" fill="#f3f3f3" stroke="#333" stroke-width="0.5"/><path d="M669.473 69.5274L670.817 68.2794L669.183 66.5206L667.839 67.7686Z" fill="#e5444c" stroke="#8a2a2a" stroke-width="0.3"/><circle cx="661" cy="89" r="3.9" fill="none" stroke="#333" stroke-width="0.9"/><path d="M655.2 89H667.2M661 83.2V95" stroke="#333" stroke-width="0.9"/><path d="M663.8 94.6H669.4M666.6 91.8V97.4" stroke="#e8730c" stroke-width="1.1"/><path d="M656.4 104.4H669.6V115.4H660.4V117L658 119L655.6 117L656.4 115.4Z" fill="#efefef" stroke="#d6d6d6" stroke-width="0.7"/><rect x="663.4" y="107.4" width="3.2" height="3.2" fill="#f8f8f8" stroke="#d0d0d0" stroke-width="0.6"/></svg>
<svg class="b" style="left:715px;top:58px" width="40" height="36" viewBox="715 58 40 36"><path d="M720.5 66V87M748.5 66V87M720.5 78.6H748.5" stroke="#d9530e" stroke-width="1" fill="none"/><path d="M723.9 75.88L720.9 78.6L723.9 81.32M745.1 75.88L748.1 78.6L745.1 81.32" stroke="#d9530e" stroke-width="0.9" fill="none"/><path d="M720 89.4H749" stroke="#2e8db3" stroke-width="1.2"/><path d="M735.6 63L741.8 63L738.2 68.6L743.4 68.6L728.6 82L733.6 72.4L730 72.4Z" fill="#f7c41a" stroke="#555" stroke-width="0.6" stroke-linejoin="round"/></svg>
<svg class="b" style="left:762px;top:58px" width="120" height="66" viewBox="762 58 120 66"><path d="M766.5 63.6V74M780.5 63.6V74M766.5 69.6H780.5" stroke="#d9530e" stroke-width="0.9" fill="none"/><path d="M768.3 68.16L766.9 69.6L768.3 71.04M778.7 68.16L780.1 69.6L778.7 71.04" stroke="#d9530e" stroke-width="0.81" fill="none"/><path d="M772.5 64.5L774.7 66.7M774.7 64.5L772.5 66.7" stroke="#d9530e" stroke-width="1"/><path d="M766 75.6H781" stroke="#2e8db3" stroke-width="1"/><path d="M798.4 72L803.6 66.8M799.6 74L805.6 70.8" stroke="#2e8db3" stroke-width="0.9"/><path d="M803.6 66.8L806.4 64M805.6 70.8L808.6 69.4" stroke="#d9530e" stroke-width="0.9" stroke-dasharray="1.4 0.8"/><path d="M808.3 62.1L810.5 64.3M810.5 62.1L808.3 64.3" stroke="#d9530e" stroke-width="1"/><path d="M810.3 67.1L812.5 69.3M812.5 67.1L810.3 69.3" stroke="#d9530e" stroke-width="1"/><path d="M800.6 75.6H807" stroke="#2e8db3" stroke-width="1"/><path d="M807 75.6H810.4" stroke="#d9530e" stroke-width="1"/><circle cx="812" cy="75.2" r="1.3" fill="none" stroke="#d9530e" stroke-width="0.8"/><path d="M767 95L771.4 86" stroke="#2e8db3" stroke-width="0.9" stroke-dasharray="2.4 1.2"/><path d="M768 96.6H774" stroke="#2e8db3" stroke-width="1"/><path d="M775.4 96.6H780" stroke="#d9530e" stroke-width="1"/><path d="M771.6 85.6C775.6 86.4 777.8 90 777.6 95.6" fill="none" stroke="#d9530e" stroke-width="0.9" stroke-dasharray="1.6 0.8"/><path d="M771 83.4L771.8 86.4L774.4 85.4M775.8 93.6L777.6 95.8L779.4 93.6" fill="none" stroke="#d9530e" stroke-width="0.8"/><path d="M778.8 87.4L781.2 89.8M781.2 87.4L778.8 89.8" stroke="#d9530e" stroke-width="1"/><rect x="798.4" y="84.6" width="6" height="6" fill="#e9e9e9" stroke="#333" stroke-width="0.9"/><rect x="798.4" y="90.6" width="6" height="6" fill="#e9e9e9" stroke="#333" stroke-width="0.9"/><path d="M798.4 96.6H804.4" stroke="#2e8db3" stroke-width="1"/><path d="M806.6 84.6H811.4M806.6 96.6H811.4M809 84.6V96.6" stroke="#d9530e" stroke-width="0.9"/><path d="M807.6 86.6L809 84.8L810.4 86.6" fill="none" stroke="#d9530e" stroke-width="0.7"/><circle cx="812.4" cy="91.2" r="1.5" fill="#fff" stroke="#d9530e" stroke-width="0.7"/><path d="M769.4 113.4L775.6 105.2V113.4Z" fill="#d9ecf4" stroke="#2e8db3" stroke-width="0.9"/><path d="M772 103.4L775.6 103.4L773.4 106.6H776L768.8 113L771 108.2H769Z" fill="#f2c21a" stroke="#555" stroke-width="0.5"/><path d="M776.6 105H779M776.6 111.6H779" stroke="#d9530e" stroke-width="0.8" stroke-dasharray="1 0.6"/><circle cx="781" cy="111.6" r="1.1" fill="none" stroke="#d9530e" stroke-width="0.7"/><path d="M780 103.8L782 105.8M782 103.8L780 105.8" stroke="#d9530e" stroke-width="1"/><path d="M768.4 115.8L770.4 117.8M770.4 115.8L768.4 117.8" stroke="#d9530e" stroke-width="1"/><path d="M776.4 113.4V116" stroke="#333" stroke-width="0.7"/><circle cx="776.4" cy="117.2" r="1.1" fill="#fff" stroke="#333" stroke-width="0.7"/><path d="M799.2 104.2L801.2 106.2M801.2 104.2L799.2 106.2" stroke="#d9530e" stroke-width="1"/><path d="M805 104.2L807 106.2M807 104.2L805 106.2" stroke="#d9530e" stroke-width="1"/><circle cx="803.1" cy="105.4" r="0.5" fill="#d9530e"/><path d="M810 104V106.4M808.8 105.2H811.2M809.2 104.4L810.8 106M810.8 104.4L809.2 106" stroke="#d9530e" stroke-width="0.6"/><path d="M798.4 111.8V118.4H806.4Z" fill="#ececec" stroke="#333" stroke-width="0.9" stroke-linejoin="round"/><path d="M810.8 109.4L805.8 114.4M805.6 111.6V114.6H808.6" fill="none" stroke="#d9530e" stroke-width="0.9"/><path d="M819.6 62V74M834.6 62V74M819.6 66H834.6" stroke="#d9530e" stroke-width="0.9" fill="none"/><path d="M821.4 64.56L820 66L821.4 67.44M832.8 64.56L834.2 66L832.8 67.44" stroke="#d9530e" stroke-width="0.81" fill="none"/><path d="M819 75.6H835" stroke="#2e8db3" stroke-width="1"/><path d="M826.072 73.5361L831.156 68.2041L829.42 66.5479L824.336 71.8799Z" fill="#e8c43a" stroke="#5a4a1a" stroke-width="0.5"/><path d="M823.4 74.6L826.072 73.5361L824.336 71.8799Z" fill="#f3f3f3" stroke="#333" stroke-width="0.5"/><path d="M831.156 68.2041L832.468 66.8281L830.732 65.1719L829.42 66.5479Z" fill="#e5444c" stroke="#8a2a2a" stroke-width="0.3"/><rect x="840.6" y="61.6" width="5.8" height="5.8" fill="#fff" stroke="#333" stroke-width="0.9"/><rect x="850" y="69.6" width="5.6" height="5.8" fill="#fff" stroke="#333" stroke-width="0.9"/><path d="M848.2 61.6H856M840.6 69.2V76" stroke="#2e8db3" stroke-width="1"/><path d="M852.6 62.8L854.6 65.8H853.5V69.4H851.7V65.8H850.6Z" fill="#fff" stroke="#222" stroke-width="0.8" stroke-linejoin="round"/><path d="M843.4 72.6L846 70.4V71.7H850V73.5H846V74.8Z" fill="#fff" stroke="#333" stroke-width="0.7" stroke-linejoin="round"/><path d="M861 62V71.4M875.6 62V71.4M861 66.2H875.6" stroke="#d9530e" stroke-width="0.9" fill="none"/><path d="M862.6 64.92L861.4 66.2L862.6 67.48M874 64.92L875.2 66.2L874 67.48" stroke="#d9530e" stroke-width="0.81" fill="none"/><path d="M867.6 62.4L869.6 64.4M869.6 62.4L867.6 64.4" stroke="#d9530e" stroke-width="1"/><path d="M861 73.6H869" stroke="#2e8db3" stroke-width="1"/><rect x="869.4" y="69.6" width="6.4" height="6.8" fill="#fff" stroke="#111" stroke-width="1"/><path d="M868 69.4H877.2M871 69.2V67.8H874.4V69.2" fill="none" stroke="#111" stroke-width="1"/><path d="M871.6 71.4V74.8M873.8 71.4V74.8" stroke="#111" stroke-width="0.9"/><path d="M820.6 90V97M834.6 90V97" stroke="#2e8db3" stroke-width="1.1"/><path d="M823.6 84V90M834.6 84V90M823.6 87H834.6" stroke="#d9530e" stroke-width="0.9" fill="none"/><path d="M825.1 85.8L824 87L825.1 88.2M833.1 85.8L834.2 87L833.1 88.2" stroke="#d9530e" stroke-width="0.81" fill="none"/><path d="M828.4 83.4L830.4 85.4M830.4 83.4L828.4 85.4" stroke="#d9530e" stroke-width="1"/><path d="M823.4 89.4L828.8 94.4L826.6 94.8L827.8 97.4L826.4 98L825.2 95.4L823.6 96.8Z" fill="#555" stroke="#222" stroke-width="0.6"/><path d="M840.6 83V94M855 83V94M840.6 87.6H855" stroke="#d9530e" stroke-width="0.9" fill="none"/><path d="M842.4 86.16L841 87.6L842.4 89.04M853.2 86.16L854.6 87.6L853.2 89.04" stroke="#d9530e" stroke-width="0.81" fill="none"/><path d="M846.9 82.9L850.3 86.3M850.3 82.9L846.9 86.3" stroke="#d9530e" stroke-width="0.9"/><rect x="845.6" y="89.6" width="5.2" height="5.6" rx="0.8" fill="#fff" stroke="#111" stroke-width="0.9"/><path d="M848 92H851.2L852.8 93.6V97.6H848Z" fill="#fff" stroke="#111" stroke-width="0.9" stroke-linejoin="round"/><path d="M862.9 83.9L866.3 87.3M866.3 83.9L862.9 87.3" stroke="#d9530e" stroke-width="0.8"/><path d="M871.9 83.9L875.3 87.3M875.3 83.9L871.9 87.3" stroke="#d9530e" stroke-width="0.8"/><path d="M864.6 90.2L866.8 93.2H865.59V97.6H863.61V93.2H862.4Z" fill="#fff" stroke="#222" stroke-width="0.8" stroke-linejoin="round"/><path d="M873.6 90.2L875.8 93.2H874.59V97.6H872.61V93.2H871.4Z" fill="#fff" stroke="#222" stroke-width="0.8" stroke-linejoin="round"/><path d="M819.6 109V118.6M833.6 109V118.6M819.6 116.4H833.6M821.4 115.2L819.8 116.4L821.4 117.6M831.8 115.2L833.4 116.4L831.8 117.6" fill="none" stroke="#d2d2d2" stroke-width="0.8"/><path d="M825 103.6L827.4 112.4L832.4 104M824.4 111.6L830.4 106.4M823.6 107.4L828.6 112.6" fill="none" stroke="#d8d8d8" stroke-width="0.7"/><path d="M842.7 103.3L844.5 105.1M844.5 103.3L842.7 105.1" stroke="#d9530e" stroke-width="1"/><path d="M851.7 103.3L853.5 105.1M853.5 103.3L851.7 105.1" stroke="#d9530e" stroke-width="1"/><path d="M840.6 106.6V110.6M846.2 106.6V110.6M840.6 108.6H846.2M842.6 107.2V110M844.4 107.2V110M849.8 106.6V110.6M855.4 106.6V110.6M849.8 108.6H855.4M851.8 107.2V110M853.6 107.2V110" stroke="#d9530e" stroke-width="0.8"/><path d="M840.8 112.6H846.4V115H850.6V112.6H855.4V118.4H840.8Z" fill="url(#gGray)" stroke="#333" stroke-width="0.9"/><rect x="862.2" y="108.6" width="8" height="9" fill="#ececec" stroke="#333" stroke-width="0.9"/><path d="M863.4 111L869 115.6V111L863.4 115.6Z" fill="#e8730c"/><path d="M865.6 109.3L866.8 110.5M866.8 109.3L865.6 110.5" stroke="#d9530e" stroke-width="0.5"/><path d="M866 108.4C867 105.6 869 104.4 871.6 104.4L873.4 106.4L869.4 108.4Z" fill="#d9d9d9" stroke="#999" stroke-width="0.5"/><rect x="874.6" y="103.8" width="2" height="4.6" fill="#2e8db3"/><path d="M870.2 116.4H877.2M872.6 116.4V118.6" stroke="#444" stroke-width="1"/><rect x="870.4" y="115.4" width="6.6" height="1.6" fill="#f2f2f2" stroke="#555" stroke-width="0.5"/></svg>
<span class="t" style="left:886.5px;top:58.5px;font-size:8.5px;line-height:10px;font-weight:700;color:#d9530e">A</span>
<span class="t" style="left:890.5px;top:59.5px;font-family:'Liberation Serif',serif;font-size:19px;line-height:20px;font-weight:700;font-style:italic;color:#d9530e">A</span>
<svg class="b" style="left:886px;top:82px" width="22" height="18" viewBox="886 82 22 18"><path d="M888.6 87.4H893L896 84.4H900.4V87.4H899.4V96.4H888.6Z" fill="#efefef" stroke="#d8d8d8" stroke-width="0.7"/><rect x="900.4" y="84" width="1.8" height="4.4" fill="#e4e4e4" stroke="#d2d2d2" stroke-width="0.5"/><path d="M892 89V95M896 90V95" stroke="#e0e0e0" stroke-width="1.4"/></svg>
<span class="t" style="left:920.8px;top:63.4px;font-size:13px;line-height:15px;font-weight:700;color:#111;">a</span>
<span class="t" style="left:925.4px;top:83.2px;font-size:9px;line-height:11px;font-weight:700;color:#333;">7</span>
<span class="t" style="left:966.6px;top:89.8px;font-size:6.5px;line-height:8.5px;font-weight:700;color:#333;">A1</span>
<span class="t" style="left:967.6px;top:61.2px;font-size:7.5px;line-height:9.5px;font-weight:400;color:#d9530e;">A</span>
<span class="t" style="left:949.8px;top:79.6px;font-size:11px;line-height:13px;font-weight:700;color:#111;">±</span>
<svg class="b" style="left:915px;top:58px" width="150" height="66" viewBox="915 58 150 66"><path d="M928 68L934.6 62.4" stroke="#d9530e" stroke-width="1.05"/><path d="M932 62.2H934.8V65" fill="none" stroke="#d9530e" stroke-width="1.05"/><path d="M941.6 74.6L952.6 64.6" stroke="#d9530e" stroke-width="1.05"/><path d="M941.4 71.8V74.8H944.4" fill="none" stroke="#d9530e" stroke-width="1.05"/><path d="M949.4 63V75.6L956.6 69.4Z" fill="none" stroke="#d9530e" stroke-width="1.05" stroke-linejoin="round"/><rect x="965.6" y="61.6" width="9" height="8.8" fill="none" stroke="#d9530e" stroke-width="1"/><path d="M970 70.4V75" stroke="#d9530e" stroke-width="1"/><path d="M970 73.4L968 76.4H972Z" fill="#d9530e"/><path d="M986.6 66.6V69.6H994.6V72.4" fill="none" stroke="#444" stroke-width="1.05"/><rect x="984.4" y="62.4" width="4.4" height="4.4" fill="url(#gOr)" stroke="#e07010" stroke-width="0.4"/><rect x="992.4" y="72.4" width="4.4" height="4.4" fill="url(#gOr)" stroke="#e07010" stroke-width="0.4"/><path d="M1016 62.4L1020.8 75M1030.6 62.4L1025.8 75" stroke="#444" stroke-width="1.05"/><path d="M1023.4 61V77" stroke="#d9530e" stroke-width="1.05" stroke-dasharray="3.2 1 1 1"/><circle cx="930.2" cy="88" r="5.6" fill="none" stroke="#d9530e" stroke-width="1.05"/><path d="M926 92L920.4 97.4" stroke="#d9530e" stroke-width="1.05"/><path d="M920.2 94.6V97.6H923.2" fill="none" stroke="#d9530e" stroke-width="1.05"/><path d="M947.6 84.6V92H956M947.6 92L942.4 97.4" fill="none" stroke="#d9530e" stroke-width="1.05"/><path d="M942.2 94.6V97.6H945.2" fill="none" stroke="#d9530e" stroke-width="1.05"/><circle cx="970" cy="90" r="7.6" fill="none" stroke="#d9530e" stroke-width="1.05"/><path d="M962.4 89.6H977.6" stroke="#d9530e" stroke-width="1.05"/><rect x="985.6" y="83.6" width="14" height="13" fill="url(#gGray)" stroke="#333" stroke-width="1"/><path d="M1018.4 82.6H1015.6V96.6H1018.4M1027.2 82.6H1030V96.6H1027.2" fill="none" stroke="#d9530e" stroke-width="1.1"/><circle cx="1022.6" cy="89.6" r="3.2" fill="none" stroke="#333" stroke-width="1.05"/><path d="M1017.6 89.6H1027.8M1022.6 84.6V94.8" stroke="#333" stroke-width="1.05"/><path d="M922 117.6H934M924.4 111H931M924.4 111L928 117.4L935 105.2" fill="none" stroke="#d9530e" stroke-width="1.05"/><rect x="945.6" y="107.6" width="11" height="6" fill="none" stroke="#d9530e" stroke-width="1"/><rect x="948.6" y="109.8" width="1.6" height="1.6" fill="#d9530e"/><rect x="952" y="109.8" width="1.6" height="1.6" fill="#d9530e"/><path d="M945.6 110H942.6V116.6" fill="none" stroke="#d9530e" stroke-width="1.05"/><path d="M941.2 114.8L942.6 116.8L944 114.8" fill="none" stroke="#d9530e" stroke-width="0.8"/><path d="M978 105.6H971L962.6 113.4" fill="none" stroke="#d9530e" stroke-width="1.05"/><path d="M962.4 110.4V113.6H965.6" fill="none" stroke="#d9530e" stroke-width="1.05"/><path d="M972.5 110.2H974.7V113.1H977.6V115.3H974.7V118.2H972.5V115.3H969.6V113.1H972.5Z" fill="#fff" stroke="#111" stroke-width="1.05" stroke-linejoin="round"/><path d="M988 103.4L984.4 109.4H986.6L984.6 113L990 107.4H987.6L990.6 103.4Z" fill="#e6e6e6" stroke="#d0d0d0" stroke-width="0.5"/><path d="M988.6 108L991.4 117M998 107L995 117" stroke="#d6d6d6" stroke-width="0.8"/><path d="M992.6 104V118.6" stroke="#d0d0d0" stroke-width="0.8" stroke-dasharray="2.4 1 1 1"/><circle cx="1023" cy="111" r="7.6" fill="#e6e6e6" stroke="#444" stroke-width="1.05"/><circle cx="1023" cy="111" r="1.5" fill="#fff" stroke="#444" stroke-width="0.8"/><circle cx="1019.4" cy="107.6" r="1.3" fill="#fbe9dc" stroke="#d9530e" stroke-width="0.8"/><circle cx="1026.6" cy="107.6" r="1.3" fill="#fbe9dc" stroke="#d9530e" stroke-width="0.8"/><circle cx="1019.4" cy="114.4" r="1.3" fill="#fbe9dc" stroke="#d9530e" stroke-width="0.8"/><circle cx="1026.6" cy="114.4" r="1.3" fill="#fbe9dc" stroke="#d9530e" stroke-width="0.8"/><path d="M1043.4 64.4H1048M1045.7 62V66.8" stroke="#222" stroke-width="1.1"/><path d="M1049.6 64.6H1052M1045.6 69.6H1052M1045.6 74.6H1052" stroke="#333" stroke-width="1.05"/><ellipse cx="1053.6" cy="64.6" rx="1.7" ry="1.1" fill="#e6f2f7" stroke="#2e8db3" stroke-width="0.7"/><ellipse cx="1053.6" cy="69.6" rx="1.7" ry="1.1" fill="#e6f2f7" stroke="#2e8db3" stroke-width="0.7"/><ellipse cx="1053.6" cy="74.6" rx="1.7" ry="1.1" fill="#e6f2f7" stroke="#2e8db3" stroke-width="0.7"/><path d="M1056.6 61V76.6" stroke="#e8730c" stroke-width="1.1"/><path d="M1043.4 83.6V88.6L1046.6 86.1Z" fill="url(#gOr)" stroke="#d9530e" stroke-width="0.6"/><path d="M1043.4 91V96.2L1046.6 93.6Z" fill="none" stroke="#d9530e" stroke-width="0.8"/><path d="M1050 85.4H1052M1046.6 90.2H1052M1046.6 95H1052" stroke="#333" stroke-width="1.05"/><ellipse cx="1053.6" cy="85.4" rx="1.7" ry="1.1" fill="#e6f2f7" stroke="#2e8db3" stroke-width="0.7"/><ellipse cx="1053.6" cy="90.2" rx="1.7" ry="1.1" fill="#e6f2f7" stroke="#2e8db3" stroke-width="0.7"/><ellipse cx="1053.6" cy="95" rx="1.7" ry="1.1" fill="#e6f2f7" stroke="#2e8db3" stroke-width="0.7"/><path d="M1056.6 82V97" stroke="#e8730c" stroke-width="1.1"/></svg>
<span class="t" style="left:989.1px;top:83.6px;font-size:10.5px;line-height:12.5px;font-weight:400;color:#222;">A</span>
<svg class="b" style="left:1070px;top:58px" width="52" height="44" viewBox="1070 58 52 44"><rect x="1074.4" y="62.4" width="4" height="4" fill="#f4f4f4" stroke="#d2d2d2" stroke-width="0.6"/><rect x="1076" y="63.6" width="12" height="11" fill="#dedede" stroke="#d2d2d2" stroke-width="0.6"/><rect x="1085" y="71" width="5" height="5" fill="#f4f4f4" stroke="#d2d2d2" stroke-width="0.6"/><rect x="1108.6" y="68.6" width="8.4" height="7" fill="#f6f6f6" stroke="#d2d2d2" stroke-width="0.6"/><rect x="1101.6" y="61.6" width="11.4" height="11" fill="#dedede" stroke="#d2d2d2" stroke-width="0.6"/><rect x="1076" y="84.6" width="12" height="11" fill="#dedede" stroke="#d2d2d2" stroke-width="0.6"/><rect x="1074.4" y="83.6" width="4.6" height="4.6" fill="#f8f8f8" stroke="#d2d2d2" stroke-width="0.6"/><rect x="1084.6" y="92.4" width="5.4" height="5.4" fill="#f8f8f8" stroke="#d2d2d2" stroke-width="0.6"/><rect x="1101.6" y="83.6" width="11.4" height="11" fill="#dedede" stroke="#d2d2d2" stroke-width="0.6"/><rect x="1108" y="90" width="8.6" height="7.4" fill="#f6f6f6" stroke="#d2d2d2" stroke-width="0.6"/></svg>
<span class="t" style="left:1132.2px;top:56.8px;font-size:21px;line-height:23px;font-weight:700;color:#fff;font-family:'Liberation Serif',serif;-webkit-text-stroke:0.8px #444;">T</span>
<span class="t" style="left:1133px;top:101.5px;font-size:13px;line-height:15px;font-weight:400;color:#e8730c;font-family:'Liberation Serif',serif;font-style:italic;">π</span>
<span class="t" style="left:1141px;top:99px;font-size:13px;line-height:15px;font-weight:400;color:#e8730c;font-family:'Liberation Serif',serif;font-style:italic;">β</span>
<svg class="b" style="left:1130px;top:58px" width="45" height="66" viewBox="1130 58 45 66"><path d="M1143.25 75.2712L1148.21 69.8152L1146.43 68.2008L1141.47 73.6568Z" fill="#e8c43a" stroke="#5a4a1a" stroke-width="0.5"/><path d="M1140.6 76.4L1143.25 75.2712L1141.47 73.6568Z" fill="#f3f3f3" stroke="#333" stroke-width="0.5"/><path d="M1148.21 69.8152L1149.49 68.4072L1147.71 66.7928L1146.43 68.2008Z" fill="#e5444c" stroke="#8a2a2a" stroke-width="0.3"/><circle cx="1161.4" cy="67.6" r="6.6" fill="#1f86ad" stroke="#176b8c" stroke-width="0.4"/><path d="M1159 62.4C1162 62 1164.6 63.6 1163.4 66L1161 67.6L1163.4 70.4L1160.4 73.4C1158.4 71.4 1160.4 69.4 1158.4 68.4C1156.8 67 1157.4 64 1159 62.4Z" fill="#fff"/><rect x="1161" y="71.4" width="5.4" height="3" rx="1.5" transform="rotate(-32 1163.7 72.9)" fill="#fff" stroke="#666" stroke-width="0.8"/><rect x="1164.2" y="69.2" width="5.4" height="3" rx="1.5" transform="rotate(-32 1166.9 70.7)" fill="#fff" stroke="#666" stroke-width="0.8"/><rect x="1133.6" y="82.6" width="14" height="15" fill="url(#gGray)" stroke="#555" stroke-width="1.05"/><path d="M1134 92.6L1139 87.4L1147.4 97.4M1141.6 91.4L1144 89L1147.4 93.4" fill="none" stroke="#666" stroke-width="0.8"/><circle cx="1144" cy="86" r="1.5" fill="#e8730c"/><path d="M1155.4 86L1161 82.6L1166.4 85V92L1161 95.6L1155.4 92.4Z" fill="#d9d9d9" stroke="#3c3c3c" stroke-width="1.05" stroke-linejoin="round"/><path d="M1155.4 86L1160.6 88.6L1166.4 85M1160.6 88.6V95.4" fill="none" stroke="#3c3c3c" stroke-width="0.8"/><circle cx="1164.8" cy="93" r="3.6" fill="#fff" stroke="#222" stroke-width="1.05"/><path d="M1143.5 110.8H1145.7V113.5H1148.4V115.7H1145.7V118.4H1143.5V115.7H1140.8V113.5H1143.5Z" fill="#fff" stroke="#111" stroke-width="1.05" stroke-linejoin="round"/></svg>
<svg class="b" style="left:1188px;top:58px" width="36" height="40" viewBox="1188 58 36 40"><rect x="1194.6" y="63.6" width="22" height="21.6" fill="url(#gGray)" stroke="#333" stroke-width="1.05"/><circle cx="1195" cy="85" r="2.9" fill="url(#gBall)" stroke="#e06a00" stroke-width="0.3"/><circle cx="1212.6" cy="84.6" r="7" fill="#fff" stroke="#222" stroke-width="1.05"/><path d="M1208.4 84.6H1216.8M1212.6 80.4V88.8" stroke="#222" stroke-width="1"/></svg>
<svg class="b" style="left:1238px;top:58px" width="125" height="40" viewBox="1238 58 125 40"><rect x="1242.4" y="61.4" width="31.4" height="31.2" fill="#fff" stroke="#3a3a3a" stroke-width="0.9"/><rect x="1241.95" y="60.95" width="32.3" height="3.4" fill="#3a3a3a"/><rect x="1247" y="70" width="22" height="16" fill="none" stroke="#e2680c" stroke-width="1.7"/><path d="M1260.6 84.4L1254.6 90.4" stroke="#6a6a6a" stroke-width="3" stroke-linecap="round"/><path d="M1260.6 84.4L1254.6 90.4" stroke="#f4f4f4" stroke-width="1.6" stroke-linecap="round"/><circle cx="1265" cy="80" r="6.2" fill="#ffffff" fill-opacity="0.72" stroke="#8a8a8a" stroke-width="0.9"/><path d="M1296.4 81.4L1287.4 90" stroke="#555" stroke-width="3.4" stroke-linecap="round"/><path d="M1296.4 81.4L1287.4 90" stroke="#f6f6f6" stroke-width="2" stroke-linecap="round"/><circle cx="1302.6" cy="75" r="8.4" fill="url(#gGray)" stroke="#777" stroke-width="0.9"/><path d="M1307 61.4L1314.4 61.4L1310.2 67.4L1315.4 67.4L1300.6 80.4L1305.6 70.6L1302.2 70.6Z" fill="#f7c41a" stroke="#555" stroke-width="0.6" stroke-linejoin="round"/><rect x="1326.4" y="61.4" width="31.4" height="31.2" fill="#fff" stroke="#3a3a3a" stroke-width="0.9"/><rect x="1325.95" y="60.95" width="32.3" height="3.4" fill="#3a3a3a"/><rect x="1338.6" y="75" width="7" height="5.2" fill="#fff" stroke="#e2680c" stroke-width="1"/><path d="M1338.5 75.008L1333 68.5" stroke="#e2680c" stroke-width="1.9"/><path d="M1329.7 65.2H1336.3L1329.7 71.8Z" fill="#e2680c"/><path d="M1345.7 75.008L1351.2 68.5" stroke="#e2680c" stroke-width="1.9"/><path d="M1354.5 65.2H1347.9L1354.5 71.8Z" fill="#e2680c"/><path d="M1338.5 80.192L1333 86.7" stroke="#e2680c" stroke-width="1.9"/><path d="M1329.7 90H1336.3L1329.7 83.4Z" fill="#e2680c"/><path d="M1345.7 80.192L1351.2 86.7" stroke="#e2680c" stroke-width="1.9"/><path d="M1354.5 90H1347.9L1354.5 83.4Z" fill="#e2680c"/></svg>
<svg class="b" style="left:1362px;top:58px" width="44" height="66" viewBox="1362 58 44 66"><path d="M1372 70.4L1366.4 76" stroke="#666" stroke-width="2.4" stroke-linecap="round"/><path d="M1372 70.4L1366.4 76" stroke="#f4f4f4" stroke-width="1.1" stroke-linecap="round"/><circle cx="1375.6" cy="67" r="4.6" fill="#fff" stroke="#666" stroke-width="0.9"/><path d="M1373.6 65.8H1377.6M1375.6 63.8V67.8M1373.6 69.4H1377.6" stroke="#e2680c" stroke-width="0.8"/><rect x="1392.4" y="62.4" width="9" height="8.6" fill="#f4f4f4" stroke="#888" stroke-width="0.7"/><rect x="1392" y="62" width="9.8" height="1.4" fill="#555"/><rect x="1386.4" y="67.6" width="10" height="8.4" fill="#fff" stroke="#e2680c" stroke-width="1"/><path d="M1394.6 69.4L1399.4 71.4L1400.6 74.6L1398.6 76.4L1395.4 74.4Z" fill="#eee" stroke="#444" stroke-width="0.6"/><rect x="1365.4" y="82.4" width="15" height="15" fill="#fff" stroke="#3a3a3a" stroke-width="0.9"/><rect x="1364.95" y="81.95" width="15.9" height="2.2" fill="#3a3a3a"/><path d="M1368.6 90.6H1377.4" stroke="#e2680c" stroke-width="1.1"/><path d="M1367.4 90.6L1370 88.988L1370 92.212Z" fill="#e2680c"/><path d="M1378.6 90.6L1376 92.212L1376 88.988Z" fill="#e2680c"/><rect x="1365.4" y="103.4" width="15" height="15" fill="#fff" stroke="#3a3a3a" stroke-width="0.9"/><rect x="1364.95" y="102.95" width="15.9" height="2.2" fill="#3a3a3a"/><path d="M1368.6 110.6C1369.4 107 1374.6 106 1376.8 108.6M1377.4 112.2C1376.6 115.6 1371.4 116.6 1369.2 114" fill="none" stroke="#e2680c" stroke-width="1.1"/><path d="M1378 109.8L1375.31 108.37L1378.09 106.758Z" fill="#e2680c"/><path d="M1368 112.8L1370.69 114.23L1367.91 115.842Z" fill="#e2680c"/></svg>
<span class="t" style="left:1419.5px;top:57px;font-size:8.5px;line-height:10.5px;font-weight:700;color:#d9530e;">A</span>
<span class="t" style="left:1421.5px;top:58.5px;font-size:18px;line-height:20px;font-weight:700;color:#d9530e;font-family:'Liberation Serif',serif;font-style:italic;">A</span><svg class="b" style="left:1745px;top:34px" width="20" height="18" viewBox="1745 34 20 18"><circle cx="1757" cy="41.4" r="4.6" fill="#fff" stroke="#555" stroke-width="0.9"/><path d="M1753.6 45L1750 48.8" stroke="#555" stroke-width="1.6" stroke-linecap="round"/></svg>
<svg class="b" style="left:1805px;top:32px" width="65" height="20" viewBox="1805 32 65 20"><circle cx="1817" cy="42" r="7.8" fill="#f7e08a" stroke="#efd060" stroke-width="0.5"/><circle cx="1814.6" cy="40.2" r="0.9" fill="#333"/><circle cx="1819.4" cy="40.2" r="0.9" fill="#333"/><path d="M1813.6 44.4C1815.6 46.4 1818.4 46.4 1820.4 44.4" fill="none" stroke="#333" stroke-width="0.8"/><circle cx="1838" cy="42" r="7.8" fill="#e8854a" stroke="#d87030" stroke-width="0.5"/><circle cx="1835.6" cy="40.2" r="0.9" fill="#333"/><circle cx="1840.4" cy="40.2" r="0.9" fill="#333"/><path d="M1834.8 46C1836.6 44.2 1839.4 44.2 1841.2 46" fill="none" stroke="#333" stroke-width="0.8"/><circle cx="1859" cy="42" r="7.6" fill="#fbfbfb" stroke="#d0d8dc" stroke-width="0.6"/></svg>
<span class="t" style="left:1855.6px;top:35px;font-size:12px;line-height:14px;font-weight:400;color:#7a8a96;">?</span>
<svg class="b" style="left:1830px;top:8px" width="85" height="16" viewBox="1830 8 85 16"><rect x="1836" y="17" width="9.6" height="1.8" fill="#fff"/><path d="M1870 13.4V11.4H1877.4V18.6H1875.4" fill="none" stroke="#cfe3ea" stroke-width="1.4"/><rect x="1867.7" y="13.7" width="7.2" height="7" fill="none" stroke="#fff" stroke-width="1.5"/><path d="M1898.6 11.4L1907.6 20.6M1907.6 11.4L1898.6 20.6" stroke="#fff" stroke-width="1.8"/></svg>
<svg class="b" style="left:1870px;top:34px" width="48" height="14" viewBox="1870 34 48 14"><rect x="1874" y="44.4" width="6" height="1.5" fill="#fff"/><path d="M1891.4 38.8V37.2H1897V43H1895.4" fill="none" stroke="#fff" stroke-width="1.1"/><rect x="1889.4" y="39.2" width="5.6" height="5.6" fill="none" stroke="#fff" stroke-width="1.2"/><path d="M1906.6 37.6L1913.4 44.6M1913.4 37.6L1906.6 44.6" stroke="#fff" stroke-width="1.4"/></svg>
<svg class="b" style="left:295px;top:200px" width="590" height="610" viewBox="295 200 590 610" shape-rendering="crispEdges" fill="none" stroke="#000" stroke-width="1">
<path fill="#808080" stroke="none" shape-rendering="auto" d="M321 272H350V274H319ZM368 272H397V274H366ZM416 272H445V274H414ZM471 272H485V274H469ZM511 272H540V274H509ZM558 272H587V274H556ZM329 319H343V321H327ZM376 319H390V321H374ZM423 319H437V321H421ZM471 319H485V321H469ZM510 319H539V321H508ZM557 319H586V321H555ZM605 319H634V321H603ZM652 319H681V321H650ZM699 319H728V321H697ZM747 319H776V321H745ZM320 366H351V368H318ZM368 366H398V368H366ZM415 366H446V368H413ZM462 366H493V368H460ZM509 366H540V368H507ZM560 366H584V368H558ZM608 366H632V368H606ZM654 366H680V368H652ZM707 366H720V368H705ZM754 366H767V368H752ZM324 414H348V416H322ZM373 414H393V416H371ZM420 414H441V416H418ZM467 414H488V416H465ZM514 414H535V416H512ZM562 414H583V416H560ZM609 414H630V416H607ZM651 414H681V416H649ZM698 414H729V416H696ZM746 414H777V416H744ZM327 461H344V463H325ZM370 461H395V463H368ZM417 461H443V463H415ZM468 461H488V463H466ZM515 461H535V463H513ZM562 461H582V463H560ZM608 461H632V463H606ZM655 461H679V463H653ZM702 461H726V463H700ZM749 461H773V463H747ZM328 508H343V510H326ZM376 508H391V510H374ZM423 508H438V510H421ZM470 508H485V510H468ZM517 508H532V510H515ZM564 508H581V510H562ZM611 508H628V510H609ZM658 508H675V510H656ZM706 508H723V510H704ZM753 508H770V510H751ZM324 587H347V589H322ZM375 587H391V589H373ZM422 587H438V589H420ZM469 587H485V589H467ZM516 587H532V589H514ZM564 587H581V589H562ZM611 587H628V589H609ZM658 587H675V589H656ZM706 587H722V589H704ZM753 587H770V589H751ZM321 666H350V668H319ZM369 666H398V668H367ZM416 666H445V668H414ZM463 666H492V668H461ZM510 666H539V668H508ZM558 666H587V668H556ZM609 666H629V668H607ZM656 666H677V668H654ZM704 666H724V668H702ZM751 666H771V668H749ZM331 791H340V793H329ZM378 791H387V793H376ZM426 791H435V793H424ZM473 791H482V793H471ZM512 791H538V793H510ZM562 791H582V793H560ZM619 791H639V793H617ZM695 791H702V793H693ZM780 791H808V793H778ZM827 791H856V793H825Z"/>
<path d="M341.5 247V266M337.5 252.5H344.5V260.5H337.5ZM323.5 254L323.5 249.5L339.5 249.5L339.5 252.5M321 253L321 255.5L326 255.5L326 253M340.5 254V259M384.5 247V265M380.5 251.5H388.5V259.5H380.5ZM373 252L380 260M374 252L380.5 258.5M373 253L379 260M376 252.5L380.5 257M383.5 254V258M426.5 241V269M422.5 249.5H430.5V257.5H422.5ZM425.5 251V256M426.5 245.5L442.5 245.5L442.5 251.5M439.5 254.5L442.5 251.5L445.5 254.5L442.5 257.5ZM442.5 257.5L442.5 261.5L426.5 261.5M433.5 261.5L435.5 259.5L437.5 261.5M433 269L433 271.5L438 271.5L438 269M486.5 213V268M453.5 231.5V268.5M451 266L451 268.5L456 268.5L456 266M458.5 226.5H466.5V234.5H458.5ZM453.5 231.5H458.5M466.5 231.5H488M479 229.5H485M460.5 224.5L464.5 222.5M461 223L465 224M470.5 246.5H478.5V254.5H470.5ZM453.5 250.5H470.5M478.5 250.5H496M472.5 244.5L476.5 242.5M473 243L477 244M496 250.5a4 4 0 1 0 8 0a4 4 0 1 0 -8 0M498 248L501.5 253M522.5 242V267.5M519.5 250.5H526.5V258.5H519.5ZM521.5 250.5V258.5M506 254.5H512M514 254.5H519.5M522.5 246.5L538.5 246.5L538.5 251.5M535.5 254.5L538.5 251.5L541.5 254.5L538.5 257.5ZM538.5 257.5L538.5 262.5L522.5 262.5M528.5 262.5L530.5 260.5L532.5 262.5M528 268L528 270.5L533 270.5L533 268M572.5 241V267M568.5 249.5H576.5V257.5H568.5ZM570.5 249.5V257.5M550 251.5H554.5M563.5 252.5H568.5V256.5H563.5ZM566 252.5V256.5M572.5 245.5L588.5 245.5L588.5 251.5M585.5 254.5L588.5 251.5L591.5 254.5L588.5 257.5ZM588.5 257.5L588.5 261.5L573 261.5M578.5 261.5L580.5 259.5L582.5 261.5M578 269L578 271.5L583 271.5L583 269M323.5 299.5H347.5V307.5H323.5ZM331.5 299.5V307.5M339.5 299.5V307.5M333.5 297.5V299.5M337.5 297.5V299.5M333.5 307.5V309M337.5 307.5V309M378.5 299.5H386.5V307.5H378.5ZM381.5 301V306M382.5 297.5V299.5M382.5 307.5V309.5M381.5 303.5H383.5M422.5 299.5H437.5V306.5H422.5ZM430.5 299.5V306.5M426.5 297.5V308.5M422.5 303L425 301.5L425 304.5ZM433.5 301V305M435.5 301V305M465.5 299.5H488.5V307.5H465.5ZM473.5 299.5V307.5M481.5 299.5V307.5M475.5 297.5V309.5M479.5 297.5V309.5M468.5 301V306M470.5 301V306M483 301L487 306M487 301L483 306M475.5 303.5L478 302L478 305ZM484.5 301V306M521.5 299.5H528.5V307.5H521.5ZM525.5 294V299.5M525.5 307.5V312M523 310L523 312.5L528 312.5L528 310M526.5 301.5V305.5M568.5 299.5H575.5V307.5H568.5ZM574.5 294V312M572 310L572 312.5L577 312.5L577 310M574.5 296.5L579.5 296.5L579.5 299.5M575.5 303.5H578.5M616.5 298.5H623.5V306.5H616.5ZM619.5 306.5V312.5M620.5 294V298.5M621.5 300V305M663.5 298.5H671.5V306.5H663.5ZM667.5 306.5V312.5M668.5 294V298.5M669.5 300V305M710.5 297.5H718.5V304.5H710.5ZM714.5 295.5V309.5M715.5 299V303M757.5 297.5H765.5V304.5H757.5ZM761.5 295V309.5M762.5 299V303M327.5 346.5V356M343.5 346.5V356M330 347.5V355M331 347.5V355M332.2 354L335.2 348.5M332.2 351.75H335.2M335.4 348.5L338.4 354M335.4 354L338.4 348.5M339.6 347.5V355M340.6 347.5V355M333.5 344.5V346.5M374.5 346.5H390.5V355.5H374.5ZM376.5 344.5V357.5M380.5 344.5V357.5M382 348L385 354M385 348L382 354M386 348L389 354M389 348L386 354M378.5 348V354M418.5 345.5V355.5M441.5 345.5V355.5M420 353.5L423 347.5M420 351H423M423.2 347.5L426.2 353.5M423.2 353.5L426.2 347.5M427.4 346.5V354.5M428.4 346.5V354.5M429.6 353.5L432.6 347.5M429.6 351H432.6M432.8 347.5L435.8 353.5M432.8 353.5L435.8 347.5M437 346.5V354.5M438 346.5V354.5M469.5 344.5V354M484.5 344.5V354M471 346.5L474 352M471 352L474 346.5M475.2 345.5V353M476.2 345.5V353M477.4 352L480.4 346.5M477.4 349.75H480.4M480.6 346.5L483.6 352M480.6 352L483.6 346.5M511.5 345.5V355.5M536.5 345.5V355.5M513 353.5L516 347.5M513 351H516M516.2 347.5L519.2 353.5M516.2 353.5L519.2 347.5M520.4 346.5V354.5M521.4 346.5V354.5M522.6 353.5L525.6 347.5M522.6 351H525.6M525.8 347.5L528.8 353.5M525.8 353.5L528.8 347.5M530 346.5V354.5M531 346.5V354.5M532.2 353.5L535.2 347.5M532.2 351H535.2M523.5 355.5V358M527.5 355.5V358M557.5 345.5H584.5V355.5H557.5ZM566.5 345.5V355.5M575.5 345.5V355.5M546.5 350.5H557.5V355.5H546.5ZM584.5 350.5H597.5V355.5H584.5ZM549.5 345.5H557.5V350.5H549.5ZM584.5 345.5H594.5V350.5H584.5ZM565.5 342V358M569.5 342V358M577 347L583 354M583 347L577 354M559 344L561 341.5L561 345.5M584 344L586 341.5L586 345.5M551 349L555 347M587 349L591 347M571.5 347V354M573.5 347V354M600 348.5H636M614.5 344.5H622.5V352.5H614.5ZM616.5 342.5L620.5 340.5M616.5 340.5L620.5 339M617 343.5L620 342.5M617.5 352.5H619.5V357.5H617.5ZM650.5 330.5H680.5V362.5H650.5ZM648 349.5H687M661.5 345.5H669.5V353.5H661.5ZM664.5 340H667.5V345.5H664.5ZM666.5 334V340M662.5 343V345.5M668.5 343V345.5M649 366.5H662.5M709.5 346.5H717.5V354.5H709.5ZM713.5 345V346.5M713.5 354.5V356M753.5 346.5H768.5V354.5H753.5ZM761.5 346.5V354.5M756.5 345V346.5M756.5 354.5V356M324.5 391.5H346.5V404.5H324.5ZM319 394.5H350M328.5 394.5H343.5V400.5H328.5ZM331 399L335 395.5L338 397L341 394M333 399.5L337 399.5L335.5 402M378.5 393.5H386.5V401.5H378.5ZM382.5 391.5V403.5M384.5 395V400M382.5 397.5H384.5M422.5 393.5H437.5V401.5H422.5ZM430.5 393.5V401.5M426.5 391.5V403.5M424.5 395V400M432 396.5H436M432 398.5H436M432.5 395V400M435.5 395V400M465.5 394.5H488.5V402.5H465.5ZM473.5 394.5V402.5M481.5 394.5V402.5M475.5 392.5V404.5M478.5 392.5V404.5M467.5 396V401M468 401L471.5 396M471.5 396V401M483.5 396V401M484 396L487 401M487 396L484 401M476 398.5H478M516.5 393.5H532.5V401.5H516.5ZM524.5 393.5V401.5M520.5 391.5V403.5M518.5 395V400M526 396.5H531M526 398.5H531M528.5 395V400M560.5 394.5V403.5M583.5 394.5V403.5M563 395.5V402.5M564 395.5V402.5M565.2 401.5L568.2 396.5M565.2 399.5H568.2M568.4 396.5L571.4 401.5M568.4 401.5L571.4 396.5M572.6 395.5V402.5M573.6 395.5V402.5M574.8 401.5L577.8 396.5M574.8 399.5H577.8M578 396.5L581 401.5M578 401.5L581 396.5M571.5 403.5V405.5M607.5 393.5V402.5M630.5 393.5V402.5M609 395.5L612 400.5M609 400.5L612 395.5M613.2 394.5V401.5M614.2 394.5V401.5M615.4 400.5L618.4 395.5M615.4 398.5H618.4M618.6 395.5L621.6 400.5M618.6 400.5L621.6 395.5M622.8 394.5V401.5M623.8 394.5V401.5M625 400.5L628 395.5M625 398.5H628M618.5 402.5V404.5M622.5 402.5V404.5M658.5 392.5V401.5M674.5 392.5V401.5M660 399.5L663 394.5M660 397.5H663M663.2 394.5L666.2 399.5M663.2 399.5L666.2 394.5M667.4 393.5V400.5M668.4 393.5V400.5M669.6 399.5L672.6 394.5M669.6 397.5H672.6M660.5 390.5V404.5M701.5 392.5V402.5M725.5 392.5V402.5M704 393.5V401.5M705 393.5V401.5M706.2 400.5L709.2 394.5M706.2 398H709.2M709.4 394.5L712.4 400.5M709.4 400.5L712.4 394.5M713.6 393.5V401.5M714.6 393.5V401.5M715.8 400.5L718.8 394.5M715.8 398H718.8M719 394.5L722 400.5M719 400.5L722 394.5M723.2 393.5V401.5M724.2 393.5V401.5M703.5 390.5V404.5M748.5 392.5V402.5M773.5 392.5V402.5M750 400.5L753 394.5M750 398H753M753.2 394.5L756.2 400.5M753.2 400.5L756.2 394.5M757.4 393.5V401.5M758.4 393.5V401.5M759.6 400.5L762.6 394.5M759.6 398H762.6M762.8 394.5L765.8 400.5M762.8 400.5L765.8 394.5M767 393.5V401.5M768 393.5V401.5M769.2 400.5L772.2 394.5M769.2 398H772.2M758.5 402.5V405M323.5 440.5H346.5V448.5H323.5ZM346.5 442.5H355.5V446.5H346.5ZM325.5 438.5V451.5M329.5 438.5V451.5M333.5 440.5V448.5M339.5 440.5V448.5M334 444.5H339M336.5 442V447M340.5 442L345 447M345 442L340.5 447M342.5 442V447M348 446L353 443M327.5 442V447M375.5 437.5H390.5V445.5H375.5ZM369.5 437L369.5 441.5L396.5 441.5L396.5 437M377 441.5a1.5 1.5 0 1 0 3 0a1.5 1.5 0 1 0 -3 0M386 441.5a1.5 1.5 0 1 0 3 0a1.5 1.5 0 1 0 -3 0M382.5 445.5V452.5M382.5 448.5H384M422.5 434.5H438.5V442.5H422.5ZM417.5 435L417.5 438.5L443.5 438.5L443.5 435M433 438.5a1.5 1.5 0 1 0 3 0a1.5 1.5 0 1 0 -3 0M427 437L425 438.5L427 440M430.5 442.5V454M429 448.5H432M429 451.5H432M473.5 441.5H481.5V449.5H473.5ZM516.5 441.5H532.5V449.5H516.5ZM524.5 441.5V449.5M559.5 441.5H583.5V449.5H559.5ZM567.5 441.5V449.5M575.5 441.5V449.5M613 444.5H624M617 442.5H621M615 447.5L621 442M657 445.5H660M670 445.5H675M662.5 448.5L669 442M703.5 438.5H724.5V451.5H703.5ZM698 442.5H729M706.5 442.5L706.5 447.5L721.5 447.5L721.5 442.5M711.7 448L713.5 446.2L715.3 448L713.5 449.8ZM711 445.5L713 443.5L715 445.5M718.5 442.5V445M750.5 438.5H771.5V451.5H750.5ZM745 442.5H776M753.5 442.5L753.5 447.5L768.5 447.5L768.5 442.5M758.7 448L760.5 446.2L762.3 448L760.5 449.8ZM758 445.5L760 443.5L762 445.5M765.5 442.5V445M329.5 486.5H345.5V494.5H329.5ZM337.5 486.5V494.5M331 495L336 485M331.5 494.5V500.5M340.5 488V493M340.5 488.5H344M333.5 488V493M376.5 488.5H392.5V496.5H376.5ZM384.5 488.5V496.5M379.5 484.5V488.5M382.5 484.5V488.5M378 484.5H381M381.5 484.5H384M378.5 496.5V499.5M378 496L383 489M387.5 490V495M389.5 490V495M389.5 490.5H392M422.5 488.5H437.5V496.5H422.5ZM427.5 488.5V496.5M432.5 488.5V496.5M424.5 490V495M425.5 490V495M428.5 490L431.5 495M430 490V495M433.5 490L436.5 495M436.5 490L433.5 495M469.5 488.5H485.5V496.5H469.5ZM474.5 488.5V496.5M480.5 488.5V496.5M470.5 490L473.5 495M472 495L473.5 490M476.5 490V495M478.5 490V495M475 495L479 490M482.5 490V495M481.5 495L484.5 490M470 495.5H474M516.5 488.5H532.5V496.5H516.5ZM521.5 488.5V496.5M526.5 488.5V496.5M518.5 490V495M518.5 492.5H521M523.5 490V495M524.5 490V495M527.5 490L531.5 495M531.5 490L527.5 495M527.5 496.5V498.5M530.5 496.5V498.5M563.5 488.5H579.5V496.5H563.5ZM569.5 488.5V496.5M574.5 488.5V496.5M565.5 490V495M566 490L568.5 495M571.5 490V495M572.5 490V495M575.5 495L578.5 490M576.5 490V495M570 495L573 490M572.5 496.5V498M576.5 496.5V498M607.5 488.5H631.5V495.5H607.5ZM615.5 488.5V495.5M623.5 488.5V495.5M611.5 494L614 490M616.5 492L619 490L619 494ZM622.5 492L620 490L620 494ZM625 490L629 494.5M629 490L625 494.5M626.5 490V494M616.5 495.5V497.5M621.5 495.5V497.5M654.5 488.5H678.5V496.5H654.5ZM662.5 488.5V496.5M670.5 488.5V496.5M656.5 490V495M659.5 490V495M657 495L659.5 490M663.5 492.5L666 490.5L666 494.5ZM669.5 492.5L667 490.5L667 494.5ZM672.5 486V499M676.5 486V499M671.5 490L675.5 495M675.5 490L671.5 495M701.5 488.5H725.5V496.5H701.5ZM709.5 488.5V496.5M717.5 488.5V496.5M703.5 485V499M707.5 485V499M704 492L706.5 490M710.5 492.5L713 490.5L713 494.5ZM716.5 492.5L714 490.5L714 494.5ZM718.5 490L722.5 495M722.5 490L718.5 495M720.5 490V495M723.5 490V495M749.5 488.5H772.5V496.5H749.5ZM757.5 490.5V491.5M757.5 493.5V494.5M765.5 490.5V491.5M765.5 493.5V494.5M313.5 536.5V557.5M318.5 532.5H326.5V540.5H318.5ZM313.5 536.5H318.5M326.5 536.5H356M321 531.5H324M334 534.5L338 534.5M335 536.5L338 538.5M330.5 553.5H338.5V561.5H330.5ZM332.5 551.5L336.5 549.5M333 550L337 551M305.5 562L305.5 557.5L330.5 557.5M302 560.5L302 563L307 563L307 560.5M338.5 557.5H343M342.5 536.5V572M340.5 549L345.5 543.5M349.5 543V548M338.5 576a4 4 0 1 0 8 0a4 4 0 1 0 -8 0M342.5 580V585.5M346.5 576.5H358.5M354.5 573L352.5 576.5L354.5 580M381 567.5L384 567.5L381 571L384 571.5L381 575L384 575M421.5 567.5H437.5V575.5H421.5ZM429.5 567.5V575.5M413.5 568.5H421.5V573.5H413.5ZM437.5 568.5H445.5V573.5H437.5ZM425.5 565.5V577.5M422.5 571.5L425 570L425 573ZM432.5 569V574M434.5 569V574M469.5 567.5H485.5V575.5H469.5ZM477.5 567.5V575.5M461.5 568.5H469.5V573.5H461.5ZM485.5 568.5H493.5V573.5H485.5ZM481.5 565V577.5M472.5 569V574M473 570L475 572L477 570M479.5 569V574M519.5 566.5H534.5V574.5H519.5ZM527.5 566.5V574.5M522.5 564.5V578M520 570.5L522.5 569L522.5 572ZM530.5 568V573M532.5 568V573M530.5 568.5H534M566.5 567.5H581.5V575.5H566.5ZM574.5 567.5V575.5M569.5 566V577M571.5 569V574M576 569.5H580M579.5 569.5V574M577 573.5H579.5M617.5 567.5H625.5V574.5H617.5ZM621.5 565V578M623.5 569V573M664.5 567.5H672.5V575.5H664.5ZM668.5 565V577M669 571.5H671M705.5 567.5H721.5V575.5H705.5ZM713.5 567.5V575.5M721.5 569.5H727.5V573.5H721.5ZM707.5 565V577M711.5 565V568M708 574L710 570M710.5 569V572M716 574.5L720 568.5M717 574.5L721 568.5M754.5 569.5H771.5V577.5H754.5ZM763.5 569.5V577.5M766.5 569.5V577.5M757.5 569.5L757.5 566L756.5 565L758.5 564L757.5 563M756.5 577.5V579.5M756 577L761 570.5M757 577L762 570.5M765.5 571V576M768 571.5H771M769.5 571.5V576M331.5 645.5H339.5V653.5H331.5ZM333.5 643V656M337.5 643V656M378.5 645.5H386.5V653.5H378.5ZM380.5 643V655.5M384.5 643V655.5M380.5 649.5H384.5M425.5 645.5H433.5V653.5H425.5ZM427.5 643V647.5M431.5 643V647.5M427.5 647.5H431.5M427.5 653.5V656M431.5 653.5V656M473.5 646.5H481.5V654.5H473.5ZM475.5 645V647.5M477.5 645V647.5M479.5 645V647.5M476 654L476 652.5L479 652.5L479 654M520.5 645.5H528.5V653.5H520.5ZM522.5 643V656M526.5 643V656M523 647L526 652.5M524 647L526.5 651M567.5 644.5H575.5V653.5H567.5ZM569.5 653.5V655.5M573.5 653.5V655.5M569.5 644.5L569.5 646.5L573.5 646.5L573.5 644.5M612.5 645.5H620.5V653.5H612.5ZM618.5 645.5V653.5M616.5 653.5V656M621 649.5H624M626 649.5H629M660.5 646.5H668.5V653.5H660.5ZM664.5 644V656M670 649.5H672M674 649.5H677M699.5 657.5L720.5 657.5L720.5 639.5M702.3 646.5a3.2 3.2 0 1 0 6.4 0a3.2 3.2 0 1 0 -6.4 0M710.3 646.5a3.2 3.2 0 1 0 6.4 0a3.2 3.2 0 1 0 -6.4 0M705.5 637V643.5M713.5 637V643.5M705.5 650L705.5 654.5L713.5 654.5M713.5 650V660M717 646.5H726M728.5 642.5L726 646.5L728.5 650.5M750.5 614.5H758.5V622.5H750.5ZM752.5 612.5L756.5 610.5M752.5 610.5L756.5 609.5M745.5 618.5H750.5M758.5 618.5H785.5M785.5 618.5L785.5 622.5L787.5 622.5L788 621M745.5 618.5V638.5M765.5 618.5V625.5M761.5 625.5H769.5V633.5H761.5ZM763.5 625.5V633.5M754.5 629.5H761.5M737 638.5H765.5M737 638.5L740 636.5L740 640.5ZM758 638.5L760 636.5L762 638.5L760 640.5ZM765.5 633.5V643.5M749.3 648a4.7 4.7 0 1 0 9.4 0a4.7 4.7 0 1 0 -9.4 0M760.8 648a4.7 4.7 0 1 0 9.4 0a4.7 4.7 0 1 0 -9.4 0M770.5 648.5H783M785 644.5L782.5 648.5L785 652.5M754.5 653L754.5 657.5L765.5 657.5M765.5 653V663M333.5 776.5a2 2 0 1 0 4 0a2 2 0 1 0 -4 0M331 776.5H333.5M337.5 776.5H340M366 772.5H399M379.5 768.5H387.5V784.5H379.5ZM379.5 776.5H387.5M379.5 780.5H387.5M383.5 768.5L383.5 765.5M383 764.5H387M384 766.5H387M381 778.5H384M422.5 773.5H430.5V781.5H422.5ZM420 777.5H432M424.5 777.5L426.5 775.5L428.5 777.5L426.5 779.5ZM474.5 774.5H482.5V782.5H474.5ZM472.5 778.5H485M476.5 778.5L478.5 776.5L480.5 778.5L478.5 780.5ZM548.5 775.5H606M545.7 775.5a1.3 1.3 0 1 0 2.6 0a1.3 1.3 0 1 0 -2.6 0M556 775.5L561.5 770L567 775.5L561.5 781ZM561.5 781V790M560.3 779L561.5 777.8L562.7 779L561.5 780.2ZM573.5 771.5H581.5V779.5H573.5ZM575 777.5H579M587.5 775.5L593 770L598.5 775.5L593 781ZM592.5 781V788M580.5 757a4 4 0 1 0 8 0a4 4 0 1 0 -8 0M583 755L586 759M585.5 761V775.5M567.5 760L568.5 759L569.5 760L568.5 761ZM576 770.5L582 766M577 768L581 764.5M579 765L583 765.5M618.5 768.5H634.5V776.5H618.5ZM607 772.5H618.5M634.5 772.5H640M622.5 770V775M624.5 773a2 2 0 1 0 4 0a2 2 0 1 0 -4 0M625 775L630 770M631.5 768.5V771.5M623.5 776.5V778M674.2 686L675.5 684.7L676.8 686L675.5 687.3ZM725.2 686L726.5 684.7L727.8 686L726.5 687.3ZM670.5 712.5H686.5V720.5H670.5ZM686.5 714.5H692.5V718.5H686.5ZM675.5 712.5V720.5M680.5 712.5V720.5M676.5 719.5L680 713.5M681.5 719.5L685 713.5M672.5 708V724M673 714.5H675M672 704.5V712M670.5 734.5H686.5V742.5H670.5ZM686.5 736.5H692.5V740.5H686.5ZM675.5 734.5V742.5M680.5 734.5V742.5M676.5 741.5L680 735.5M681.5 741.5L685 735.5M672.5 731V746M688 739.5L691 737.5M675 729V734.5M721.5 712.5H737.5V720.5H721.5ZM737.5 714.5H743.5V718.5H737.5ZM726.5 712.5V720.5M731.5 712.5V720.5M727.5 719.5L731 713.5M732.5 719.5L736 713.5M723.5 708V724M724 714.5H726M723 704.5V712M721.5 734.5H737.5V742.5H721.5ZM737.5 736.5H743.5V740.5H737.5ZM726.5 734.5V742.5M731.5 734.5V742.5M727.5 741.5L731 735.5M732.5 741.5L736 735.5M723.5 731V746M739 739.5L742 737.5M726 729V734.5M653.5 755.5L694.5 755.5L694.5 782M698.5 760V782M692.5 760.5H708.5V767.5H692.5ZM700.5 760.5V767.5M696.5 762V766M702 762L706 766.5M706 762L702 766.5M663.5 755.5V786.5M662.1 783.5L663.5 782.1L664.9 783.5L663.5 784.9ZM657.1 783L658.5 781.6L659.9 783L658.5 784.4ZM656.5 755.5L658.5 753.5L660.5 755.5M788.5 772.5H796.5V779.5H788.5ZM790.5 770V782M794.5 770V782M835.5 772.5H843.5V780.5H835.5ZM837.5 770V780.5M841.5 770V780.5M837.5 776.5H841.5"/>
<path shape-rendering="auto" stroke-width="1" stroke="#000" d="M332 258L333.65 254L335.025 259L336.675 254L337.5 256.5M431 255.5L432.5 251.5L433.75 256.5L435.25 251.5L436 254M527 256L528.5 252L529.75 257L531.25 252L532 254.5M577 255L578.5 251L579.75 256L581.25 251L582 253.5M516 305L517.65 301L519.025 306L520.675 301L521.5 303.5M563 305L564.65 301L566.025 306L567.675 301L568.5 303.5M611 304L612.65 300L614.025 305L615.675 300L616.5 302.5M658 304L659.65 300L661.025 305L662.675 300L663.5 302.5M705 302L706.65 298L708.025 303L709.675 298L710.5 300.5M316 446L318.25 442L320.125 447L322.375 442L323.5 444.5M324 492L325.65 488L327.025 493L328.675 488L329.5 490.5M371 494L372.65 490L374.025 495L375.675 490L376.5 492.5M514 572L515.65 568L517.025 573L518.675 568L519.5 570.5M561 573L562.65 569L564.025 574L565.675 569L566.5 571.5M612 572.5L613.65 568.5L615.025 573.5L616.675 568.5L617.5 571M659 573L660.65 569L662.025 574L663.675 569L664.5 571.5M700 573L701.65 569L703.025 574L704.675 569L705.5 571.5M749 575L750.65 571L752.025 576L753.675 571L754.5 573.5M607 651L608.65 647L610.025 652L611.675 647L612.5 649.5M655 651.5L656.65 647.5L658.025 652.5L659.675 647.5L660.5 650M769.5 631L770.85 627L771.975 632L773.325 627L774 629.5M665.5 739.7L667 736.3L668.25 740.7L669.75 736.3L670.5 738.5M716.5 739.7L718 736.3L719.25 740.7L720.75 736.3L721.5 738.5"/>
<path stroke-dasharray="3 2" d="M345 256.5L349.5 256.5L349.5 262.5L342 262.5M332 263L332 265.5L337 265.5L337 263M388.5 255.5L392.5 255.5L392.5 262.5L385 262.5M422 253.5L417.5 253.5L417.5 245.5L426 245.5M435.5 262V271M477.5 213V243M462.5 235L462.5 237.5L477.5 237.5M474.5 255L474.5 259.5L487 259.5M530.5 263V270M556 251.5H566M563 254.5L557.5 254.5L557.5 261.5L572 261.5M580.5 262.5V271M525.5 296.5L531.5 296.5L531.5 303M620.5 295.5L626.5 295.5L626.5 303M668.5 295.5L674.5 295.5L674.5 303M661.5 304L661.5 311.5L665 311.5M718.5 300.5L721.5 300.5L721.5 307.5L715 307.5M752.5 303L753.5 298.5L755 303L756.5 298.5L757.5 301M765.5 300.5L769.5 300.5L769.5 307.5L762 307.5M753 306L753 310L757.5 310L757.5 307.5M608.5 349L608.5 361.5L629.5 361.5L629.5 349M654.5 349L654.5 336.5L676.5 336.5L676.5 349M663.5 353.5L663.5 357L666 356L663 359L662.5 366.5M322.5 541L322.5 546.5L332.5 546.5L332.5 553M332.5 537V546M334.5 562L334.5 566.5L342 566.5M754.5 622.5V643M372.5 772L372.5 764.5L381 764.5L381 768M387.5 772.5L393.5 772.5L393.5 787.5L383.5 787.5L383.5 784.5M431 774.5L440.5 774.5L440.5 772M469.5 771L469.5 775.5L474 775.5M559 777.5H564M573 773.5L568.5 773.5L568.5 761M577.5 782.5L585.5 782.5L585.5 780M653.5 755.5L653.5 704.5L722.5 704.5M662.5 704.5L662.5 716.5L670.5 716.5M713.5 704.5L713.5 716.5L721.5 716.5M658.5 755.5V786.5"/>
<path stroke-dasharray="17 2 2 2" d="M412.5 243.5H447.5V266.5H412.5ZM449.5 217.5H491.5V263.5H449.5ZM515.5 243.5H543.5V265.5H515.5ZM554.5 243.5H594V265.5H554.5ZM605.5 334.5H631.5V365.5H605.5ZM680.5 348V356M310.5 523.5H349.5V582.5H310.5ZM720.5 639.5L699.5 639.5L699.5 657.5M742.5 604.5H778.5V660.5H742.5ZM369.5 760.5H396.5V791.5H369.5ZM508.5 767.5H540.5V784.5H508.5ZM553.5 763.5H600.5V786.5H553.5ZM647.5 692.5H748.5V778.5H647.5Z"/>
<path stroke-dasharray="1 2" d="M675.5 684V712M726.5 684V712M659.5 748.5L659.5 728.5L725.5 728.5L725.5 764.5L709 764.5M659.5 748.5L698.5 748.5L698.5 760M671.5 742.5L671.5 764.5L692 764.5"/>
<path fill="#000" stroke="none" d="M458 233H467V235H458ZM480 231H485V233H480ZM470 253H479V255H470ZM327 346H344V348H327ZM327 354.5H344V356.5H327ZM418 345H442V347H418ZM418 354H442V356H418ZM469 344H485V346H469ZM469 352.5H485V354.5H469ZM511 345H537V347H511ZM511 354H537V356H511ZM614.5 349.5H622.5V351H614.5ZM330 392.5H334V394H330ZM338 392.5H342V394H338ZM560 394H584V396H560ZM560 402H584V404H560ZM607 393H631V395H607ZM607 401H631V403H607ZM658 392H675V394H658ZM658 400H675V402H658ZM701 392H726V394H701ZM701 401H726V403H701ZM748 392H774V394H748ZM748 401H774V403H748ZM616.5 443.5H620V445.5H616.5ZM664 444H668V446.5H664ZM711 440H716V441.5H711ZM758 440H763V441.5H758ZM608 489H611V492.5H608ZM319 538H326V539.5H319ZM350.5 535.5H352.5V537.5H350.5ZM320.5 528.5H324.5V530H320.5ZM331 559H338V560.5H331ZM341 545H344V548.5H341ZM340.5 572.5H344.5V574.5H340.5ZM358 572H367V574H358ZM358 578.5H367V580.5H358ZM358 572H360V580.5H358ZM365 572H367V580.5H365ZM331 649H333V652H331ZM569.5 651.5H573.5V653H569.5ZM663.5 649H665.5V651H663.5ZM704.5 642.5H707V644.5H704.5ZM712.5 642.5H715V644.5H712.5ZM751 620H758V621.5H751ZM753.5 628.5H755.5V630.5H753.5ZM737.5 637H740V640.5H737.5ZM752.5 643.5H756V645.5H752.5ZM764 643.5H767.5V645.5H764ZM611 771.5H613.5V772.5H611ZM671 716H673V719H671ZM671 738H673V741H671ZM722 716H724V719H722ZM722 738H724V741H722ZM658.5 747.5H660.5V749.5H658.5ZM788 772H797V773.5H788ZM788 778.5H797V780H788Z"/>
</svg>
<svg class="b" style="left:0px;top:142px" width="36" height="24" viewBox="0 142 36 24"><defs><linearGradient id="gPr" x1="0" y1="0" x2="0" y2="1"><stop offset="0" stop-color="#9ccbdb"/><stop offset="0.5" stop-color="#ffffff"/><stop offset="1" stop-color="#e8e8e8"/></linearGradient></defs><rect x="5.4" y="148.6" width="19.2" height="8.8" fill="url(#gPr)" stroke="#8aa" stroke-width="0.4"/><rect x="6.6" y="153.2" width="4.6" height="1.8" fill="#fff" stroke="#999" stroke-width="0.5"/><rect x="12.6" y="153.2" width="4.6" height="1.8" fill="#fff" stroke="#999" stroke-width="0.5"/><rect x="18.6" y="153.2" width="4.6" height="1.8" fill="#fff" stroke="#999" stroke-width="0.5"/></svg>
<svg class="b" style="left:14px;top:172px" width="180" height="24" viewBox="14 172 180 24"><circle cx="21.8" cy="187.6" r="2.7" fill="url(#gBall)"/><path d="M22.9 176.7H30.4L33.2 179.6V191.2H22.9Z" fill="#fff" stroke="#3c3c3c" stroke-width="1"/><path d="M30.4 176.7V179.6H33.2" fill="none" stroke="#3c3c3c" stroke-width="0.8"/><path d="M24.7 180.6H27.6V183.6H30.6V186.4H24.7Z" fill="#55b2d2" stroke="#3c3c3c" stroke-width="0.7"/><rect x="19.6" y="186.5" width="13.2" height="2.2" fill="#fff" stroke="#3c3c3c" stroke-width="0.9"/><rect x="22.9" y="188.7" width="10.4" height="2.6" fill="#fff" stroke="#3c3c3c" stroke-width="0.9"/><path d="M144.2 180.2L151.8 187.8M151.8 180.2L144.2 187.8" stroke="#222" stroke-width="1"/><circle cx="176.4" cy="187.6" r="2.7" fill="url(#gBall)"/><path d="M177.5 176.7H185L187.8 179.6V191.2H177.5Z" fill="#fff" stroke="#3c3c3c" stroke-width="1"/><path d="M185 176.7V179.6H187.8" fill="none" stroke="#3c3c3c" stroke-width="0.8"/><path d="M179.3 180.6H182.2V183.6H185.2V186.4H179.3Z" fill="#55b2d2" stroke="#3c3c3c" stroke-width="0.7"/><rect x="174.2" y="186.5" width="13.2" height="2.2" fill="#fff" stroke="#3c3c3c" stroke-width="0.9"/><rect x="177.5" y="188.7" width="10.4" height="2.6" fill="#fff" stroke="#3c3c3c" stroke-width="0.9"/><path d="M325.6 180.2L333.2 187.8M333.2 180.2L325.6 187.8" stroke="#fff" stroke-width="1.1"/></svg>
<svg class="b" style="left:1830px;top:174px" width="60" height="16" viewBox="1830 174 60 16"><path d="M1841.4 178.6V185.4L1837.6 182Z" fill="none" stroke="#333" stroke-width="0.8"/><path d="M1850.6 178.6V185.4L1854.4 182Z" fill="none" stroke="#333" stroke-width="0.8"/><path d="M1862.8 180H1871.2L1867 184.4Z" fill="#111"/><path d="M1876.8 177.8L1885.2 186.2M1885.2 177.8L1876.8 186.2" stroke="#111" stroke-width="1"/></svg>
<svg class="b" style="left:1889px;top:142px" width="29" height="180" viewBox="1889 142 29 180"><path d="M1897.4 153.6L1904 149.6L1908.8 152.6V163.6L1902.6 166.4L1897.4 163Z" fill="url(#gOrH)" stroke="#777" stroke-width="0.5"/><path d="M1897.4 153.6L1904 149.6L1904.8 150.2L1898.6 154.2V163.6L1897.4 163Z" fill="#f2f2f2" stroke="#666" stroke-width="0.5"/><path d="M1906.6 158.4H1911.6L1914.6 161.4V167.6H1906.6Z" fill="#e8e8e8" stroke="#777" stroke-width="0.7"/><path d="M1908.6 160.4V164.4H1912.6" fill="none" stroke="#fff" stroke-width="1.2"/><rect x="1904.6" y="165" width="10.4" height="3" fill="#d4d4d4" stroke="#888" stroke-width="0.5"/><rect x="1898.4" y="186.6" width="10.4" height="9.4" fill="#fff" stroke="#777" stroke-width="0.9"/><rect x="1903.6" y="191" width="10" height="9.6" fill="#fff" stroke="#777" stroke-width="0.9"/><rect x="1896.6" y="185" width="2.4" height="2" fill="#e8730c"/><rect x="1912.6" y="185" width="2.4" height="2" fill="#e8730c"/><rect x="1896.6" y="199" width="2.4" height="2" fill="#e8730c"/><rect x="1912.6" y="199" width="2.4" height="2" fill="#e8730c"/><path d="M1906.4 262L1915.4 266.4L1906.4 270.6L1897.4 266.4Z" fill="#dcdcdc" stroke="#8a8a8a" stroke-width="0.6"/><path d="M1897.4 270L1906.4 274.4L1915.4 270" fill="none" stroke="#8a8a8a" stroke-width="0.9"/><path d="M1897.4 273.6L1906.4 278L1915.4 273.6" fill="none" stroke="#8a8a8a" stroke-width="0.9"/><path d="M1898.6 311L1906.6 303.4" stroke="#e8730c" stroke-width="3" stroke-linecap="round"/><path d="M1897 299.6L1901.6 296.4L1905 299.4L1903 301.4L1900.6 300L1898.4 302Z" fill="#bdbdbd" stroke="#777" stroke-width="0.5"/><path d="M1906 303L1912 297.4M1911 296.4L1913.4 298.8" stroke="#777" stroke-width="1.2"/><path d="M1907.6 303.6L1913.6 309L1911.2 309.4L1912.4 312L1911 312.6L1909.8 310L1908 311.4Z" fill="#fff" stroke="#245" stroke-width="0.7"/></svg>
<span class="t" style="left:1896.5px;top:207px;font-size:12px;line-height:14px;color:#1a1a2a;writing-mode:vertical-rl;letter-spacing:0.1px">Groups</span>
<svg class="b" style="left:0px;top:852px" width="240" height="17" viewBox="0 852 240 17"><rect x="0.4" y="853.6" width="15" height="14.4" fill="#c6c6c6" stroke="#e8e8e8" stroke-width="0.8"/><path d="M0.4 868H15.6V853.6" fill="none" stroke="#8a8a8a" stroke-width="0.8"/><rect x="16.3" y="853.6" width="15" height="14.4" fill="#c6c6c6" stroke="#e8e8e8" stroke-width="0.8"/><path d="M16.3 868H31.5V853.6" fill="none" stroke="#8a8a8a" stroke-width="0.8"/><rect x="32.2" y="853.6" width="15" height="14.4" fill="#c6c6c6" stroke="#e8e8e8" stroke-width="0.8"/><path d="M32.2 868H47.4V853.6" fill="none" stroke="#8a8a8a" stroke-width="0.8"/><rect x="48.1" y="853.6" width="15" height="14.4" fill="#c6c6c6" stroke="#e8e8e8" stroke-width="0.8"/><path d="M48.1 868H63.3V853.6" fill="none" stroke="#8a8a8a" stroke-width="0.8"/><path d="M3.6 857V865" stroke="#8c8c8c" stroke-width="1.1"/><path d="M10.6 857V865L5.4 861Z" fill="#8c8c8c"/><path d="M26.6 857V865L21 861Z" fill="#8c8c8c"/><path d="M37 857V865L42.6 861Z" fill="#8c8c8c"/><path d="M52.6 857V865L58 861Z" fill="#8c8c8c"/><path d="M59.6 857V865" stroke="#8c8c8c" stroke-width="1.1"/><path d="M65 853L72.4 868.4H137L144.4 853Z" fill="#fff" stroke="#111" stroke-width="0.9"/><rect x="66" y="852" width="78" height="1.6" fill="#fff"/><path d="M144.4 853L140 862L143 868.4H195L202 853Z" fill="#fdd9bd" stroke="#111" stroke-width="0.9"/><path d="M202 853L197.6 862L200.6 868.4H229L236 853Z" fill="#fdd9bd" stroke="#111" stroke-width="0.9"/><rect x="209" y="856.6" width="11.4" height="8.4" fill="#fff" stroke="#1414e6" stroke-width="1.1"/><rect x="212.6" y="860" width="6.4" height="3.6" fill="#eee" stroke="#666" stroke-width="0.7"/><path d="M207.6 857.6H212.6M210.1 855V860.4M208.4 855.8L211.8 859.4M211.8 855.8L208.4 859.4" stroke="#f01020" stroke-width="1.1"/></svg>
<span class="t" style="left:76.50px;top:852.50px;font-size:12px;line-height:16px;letter-spacing:-0.048px;color:#000;font-weight:700;">2D Model</span>
<span class="t" style="left:151.50px;top:852.50px;font-size:12px;line-height:16px;letter-spacing:-1.007px;color:#111;font-weight:400;">Sheet1</span>
<svg class="b" style="left:1580px;top:869px" width="340" height="20" viewBox="1580 869 340 20"><rect x="1585.4" y="872.4" width="15.6" height="13.8" fill="#fff" stroke="#aaa" stroke-width="0.5"/><rect x="1585" y="871.8" width="16.4" height="1.4" fill="#555"/><rect x="1588" y="875.6" width="10" height="7.6" fill="none" stroke="#e2680c" stroke-width="1.1"/><circle cx="1598" cy="881.6" r="2.8" fill="#f4f4f4" stroke="#999" stroke-width="0.6"/><path d="M1596 883.8L1593.6 886.4" stroke="#aaa" stroke-width="1.2"/><path d="M1615 881.4L1609.6 886.4" stroke="#e8e8e8" stroke-width="2.4" stroke-linecap="round"/><circle cx="1618" cy="877.6" r="4.6" fill="#fff" stroke="#ddd" stroke-width="0.6"/><path d="M1616 876.6H1620M1618 874.6V878.6M1616 880.2H1620" stroke="#e2680c" stroke-width="0.8"/><path d="M1637 881.6L1631.6 886.4" stroke="#e8e8e8" stroke-width="2.6" stroke-linecap="round"/><circle cx="1639.6" cy="878.6" r="4.4" fill="#ececec" stroke="#d0d0d0" stroke-width="0.6"/><path d="M1641 872L1644.4 872L1642.4 875H1644.6L1637.6 881.6L1640 876.8H1638.4Z" fill="#f7c41a" stroke="#c89010" stroke-width="0.3"/><rect x="1651.4" y="872.4" width="15.6" height="13.8" fill="#fff" stroke="#aaa" stroke-width="0.5"/><rect x="1651" y="871.8" width="16.4" height="1.4" fill="#555"/><path d="M1654.4 875L1664 884.4M1664 875L1654.4 884.4" stroke="#e2680c" stroke-width="1.1"/><rect x="1657.4" y="878" width="3.6" height="3.2" fill="#fff" stroke="#e2680c" stroke-width="0.7"/><path d="M1653.6 874.1H1656.8L1653.6 877.3Z" fill="#e2680c"/><path d="M1664.8 874.1H1661.6L1664.8 877.3Z" fill="#e2680c"/><path d="M1653.6 885.3H1656.8L1653.6 882.1Z" fill="#e2680c"/><path d="M1664.8 885.3H1661.6L1664.8 882.1Z" fill="#e2680c"/><rect x="1673.4" y="872.4" width="15.6" height="13.8" fill="#fff" stroke="#aaa" stroke-width="0.5"/><rect x="1673" y="871.8" width="16.4" height="1.4" fill="#555"/><path d="M1677.6 879.8H1684.8" stroke="#e2680c" stroke-width="1.1"/><path d="M1675.8 879.8L1678.6 878.064L1678.6 881.536Z" fill="#e2680c"/><path d="M1686.6 879.8L1683.8 881.536L1683.8 878.064Z" fill="#e2680c"/><rect x="1695.5" y="871.5" width="149.6" height="15.6" fill="none" stroke="#9cc4e8" stroke-width="1"/><circle cx="1703.4" cy="879.4" r="6.4" fill="#fff"/><path d="M1699.6 879.4H1707.2" stroke="#e2680c" stroke-width="1.2"/><circle cx="1835.4" cy="879.4" r="6.4" fill="#fff"/><path d="M1831.4 879.4H1839.4M1835.4 875.4V883.4" stroke="#e2680c" stroke-width="1.2"/><path d="M1714.6 879.8H1717.4M1725.6 879.8H1826.4" stroke="#fff" stroke-width="1.2"/><path d="M1718.4 874.4H1724.4V881.4L1721.4 884.6L1718.4 881.4Z" fill="#fff"/><rect x="1720.8" y="876" width="1.3" height="5" fill="#e2680c"/><rect x="1851.4" y="873.6" width="15" height="10.6" rx="2.6" fill="#f00a14"/><path d="M1857 876.4V881.6L1861.8 879Z" fill="#fff"/><circle cx="1883.4" cy="879.4" r="7" fill="#d8d8d8" stroke="#f4f4f4" stroke-width="0.8"/><circle cx="1883.4" cy="879.4" r="3" fill="#e01020"/><rect x="1900.4" y="872" width="14" height="14.4" rx="2.6" fill="#fff"/><path d="M1907.4 875V881.6M1904.8 877.4L1907.4 874.8L1910 877.4M1903.6 881.4V884H1911.2V881.4" fill="none" stroke="#e8404c" stroke-width="0.9"/></svg>
<svg class="b" style="left:1825px;top:890px" width="60" height="6" viewBox="1825 890 60 6"><path d="M1832 893.6V896M1838.4 894.4H1843M1848 893.6H1852.6M1856.6 894.6L1858.4 893.4L1860.4 896M1866 893.6V896L1869 893.6V896" fill="none" stroke="#e8e8e8" stroke-width="1.1"/></svg>
</body></html>
